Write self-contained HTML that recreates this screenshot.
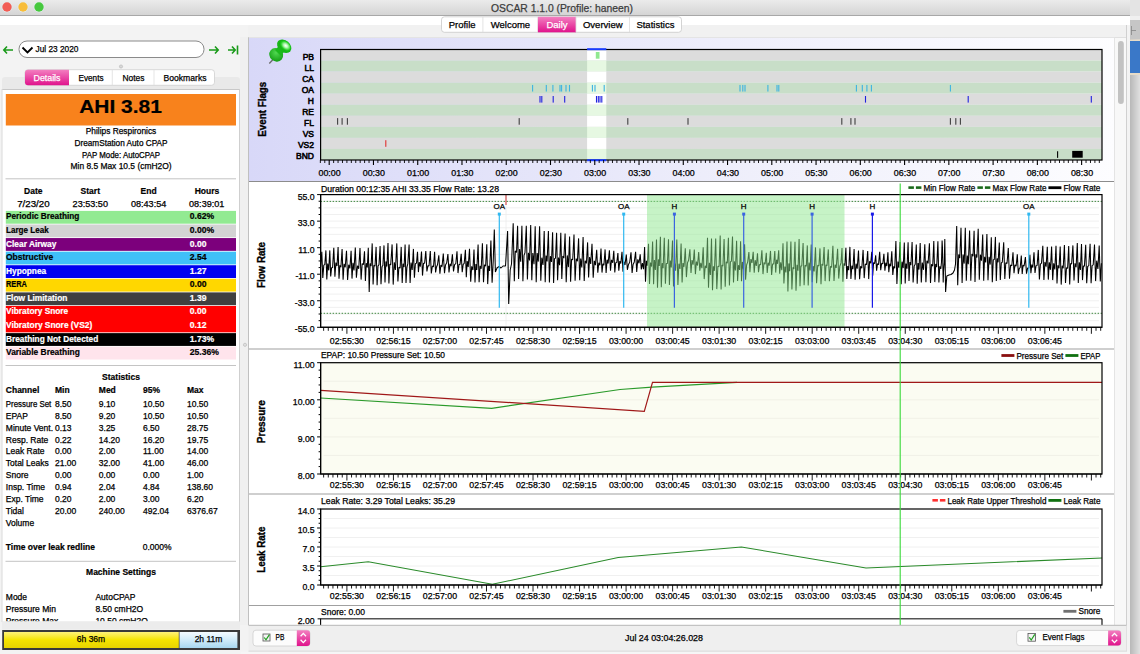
<!DOCTYPE html><html><head><meta charset="utf-8"><style>html,body{margin:0;padding:0;width:1140px;height:654px;overflow:hidden;background:#f3f3f3}</style></head><body><svg width="1140" height="654" viewBox="0 0 1140 654" style="position:absolute;left:0;top:0;font-family:'Liberation Sans', sans-serif">
<defs>
<linearGradient id="tb" x1="0" y1="0" x2="0" y2="1"><stop offset="0" stop-color="#ebebeb"/><stop offset="1" stop-color="#d3d3d3"/></linearGradient>
<linearGradient id="pink" x1="0" y1="0" x2="0" y2="1"><stop offset="0" stop-color="#f37fc0"/><stop offset="1" stop-color="#e0138c"/></linearGradient>
<linearGradient id="lav" x1="0" y1="0" x2="1" y2="0"><stop offset="0" stop-color="#d8d8f8"/><stop offset="0.55" stop-color="#eeeefb"/><stop offset="1" stop-color="#fdfdff"/></linearGradient>
<linearGradient id="yel" x1="0" y1="0" x2="0" y2="1"><stop offset="0" stop-color="#fff27a"/><stop offset="0.5" stop-color="#f5e400"/><stop offset="1" stop-color="#e8d400"/></linearGradient>
<linearGradient id="lblue" x1="0" y1="0" x2="0" y2="1"><stop offset="0" stop-color="#f4fbff"/><stop offset="0.6" stop-color="#c8e8f8"/><stop offset="1" stop-color="#a8d8f0"/></linearGradient>
<linearGradient id="pin" x1="0" y1="0" x2="1" y2="1"><stop offset="0" stop-color="#7ef07e"/><stop offset="1" stop-color="#1a9a1a"/></linearGradient>
<linearGradient id="rstrip" x1="0" y1="0" x2="1" y2="0"><stop offset="0" stop-color="#b8b8b8"/><stop offset="1" stop-color="#e0e0e0"/></linearGradient>
</defs>
<rect x="0" y="0" width="1140" height="654" fill="#f3f3f3" />
<rect x="1130" y="0" width="10" height="654" fill="url(#rstrip)" />
<rect x="1130" y="0" width="10" height="16" fill="#e4e4e4" />
<rect x="1130" y="16" width="10" height="4" fill="#f0f0f0" />
<rect x="1130" y="20" width="10" height="19.5" fill="#c6c6c6" />
<line x1="1131" y1="30.5" x2="1136" y2="30.5" stroke="#888" stroke-width="0.8" />
<line x1="1131.5" y1="26" x2="1131.5" y2="35" stroke="#888" stroke-width="0.8" />
<rect x="1130" y="39.5" width="10" height="1.5" fill="#e8dcc8" />
<rect x="1130" y="41" width="10" height="32" fill="#3a78c8" />
<rect x="1130" y="73" width="10" height="2" fill="#e8dcc8" />
<rect x="0" y="0" width="1130" height="16" fill="url(#tb)" />
<line x1="0" y1="15.5" x2="1130" y2="15.5" stroke="#a8a8a8" stroke-width="1" />
<circle cx="7" cy="7" r="5.3" fill="#e4eef0"/><circle cx="7" cy="7" r="4.7" fill="#f25c54"/>
<circle cx="23" cy="7" r="5.3" fill="#e4eef0"/><circle cx="23" cy="7" r="4.7" fill="#f8bd3a"/>
<circle cx="39" cy="7" r="5.3" fill="#e4eef0"/><circle cx="39" cy="7" r="4.7" fill="#47c83e"/>
<text x="562" y="11.5" font-size="11" font-weight="normal" fill="#3c3c3c" text-anchor="middle" textLength="142" lengthAdjust="spacingAndGlyphs" stroke="#3c3c3c" stroke-width="0.25" >OSCAR 1.1.0 (Profile: haneen)</text>
<rect x="0" y="16" width="1130" height="9" fill="#ffffff" />
<path d="M248,37 L248,26 Q248,25 250,25 L1125,25 Q1127,25 1127,27 L1127,37 Z" fill="#f1f1f1"/>
<line x1="248" y1="37.5" x2="1127" y2="37.5" stroke="#c8c8c8" stroke-width="1" />
<rect x="441.5" y="16.8" width="240" height="15.5" rx="3" fill="#ffffff" stroke="#c9c9c9" stroke-width="0.8"/>
<text x="462.15" y="28" font-size="9.5" font-weight="normal" fill="#000" text-anchor="middle" stroke="#000" stroke-width="0.25" >Profile</text>
<line x1="482.9" y1="17" x2="482.9" y2="32" stroke="#dcdcdc" stroke-width="0.8" />
<text x="510.4" y="28" font-size="9.5" font-weight="normal" fill="#000" text-anchor="middle" stroke="#000" stroke-width="0.25" >Welcome</text>
<line x1="537.9" y1="17" x2="537.9" y2="32" stroke="#dcdcdc" stroke-width="0.8" />
<rect x="537.9" y="16.8" width="38.10000000000002" height="15.5" fill="url(#pink)" />
<text x="556.95" y="28" font-size="9.5" font-weight="normal" fill="#fff" text-anchor="middle" stroke="#fff" stroke-width="0.25" >Daily</text>
<line x1="576" y1="17" x2="576" y2="32" stroke="#dcdcdc" stroke-width="0.8" />
<text x="602.75" y="28" font-size="9.5" font-weight="normal" fill="#000" text-anchor="middle" stroke="#000" stroke-width="0.25" >Overview</text>
<line x1="629.5" y1="17" x2="629.5" y2="32" stroke="#dcdcdc" stroke-width="0.8" />
<text x="655.4" y="28" font-size="9.5" font-weight="normal" fill="#000" text-anchor="middle" stroke="#000" stroke-width="0.25" >Statistics</text>
<g stroke="#1a9a1a" stroke-width="1.6" fill="none"><path d="M4,50 H13 M7,46.5 L3.8,50 L7,53.5"/></g>
<g stroke="#1a9a1a" stroke-width="1.6" fill="none"><path d="M209,50 H218 M215,46.5 L218.2,50 L215,53.5"/></g>
<g stroke="#1a9a1a" stroke-width="1.6" fill="none"><path d="M228,50 H235 M232,46.5 L235.2,50 L232,53.5 M237.5,45.5 V54.5"/></g>
<rect x="19" y="41" width="185" height="16.5" rx="8" fill="#fff" stroke="#8a8a8a" stroke-width="1"/>
<path d="M22.5,47.5 L27.5,52.5 L32.5,47.5" stroke="#000" stroke-width="1.8" fill="none"/>
<text x="35.5" y="51.7" font-size="9" font-weight="normal" fill="#000" text-anchor="start" textLength="43" lengthAdjust="spacingAndGlyphs" stroke="#000" stroke-width="0.25" >Jul 23 2020</text>
<circle cx="121" cy="66.5" r="1.6" fill="#d8d8d8" stroke="#aaa" stroke-width="0.5"/>
<rect x="2" y="77" width="238" height="550" rx="3" fill="#e9e9e9"/>
<rect x="2" y="89" width="237.5" height="532.5" fill="#ffffff" />
<line x1="2" y1="89.5" x2="239.5" y2="89.5" stroke="#c8c8c8" stroke-width="1" />
<line x1="239.5" y1="89" x2="239.5" y2="622" stroke="#cfcfcf" stroke-width="1" />
<line x1="2" y1="89" x2="2" y2="622" stroke="#dadada" stroke-width="1" />
<rect x="25" y="69.7" width="189.5" height="15.6" rx="3" fill="#ffffff" stroke="#cfcfcf" stroke-width="0.8"/>
<path d="M28,69.7 H69 V85.3 H28 Q25,85.3 25,82.3 V72.7 Q25,69.7 28,69.7 Z" fill="url(#pink)"/>
<text x="47" y="80.8" font-size="9" font-weight="normal" fill="#fff" text-anchor="middle" textLength="27" lengthAdjust="spacingAndGlyphs" stroke="#fff" stroke-width="0.25" >Details</text>
<text x="91" y="80.8" font-size="9" font-weight="normal" fill="#000" text-anchor="middle" textLength="25" lengthAdjust="spacingAndGlyphs" stroke="#000" stroke-width="0.25" >Events</text>
<text x="133.5" y="80.8" font-size="9" font-weight="normal" fill="#000" text-anchor="middle" textLength="22" lengthAdjust="spacingAndGlyphs" stroke="#000" stroke-width="0.25" >Notes</text>
<text x="185" y="80.8" font-size="9" font-weight="normal" fill="#000" text-anchor="middle" textLength="43" lengthAdjust="spacingAndGlyphs" stroke="#000" stroke-width="0.25" >Bookmarks</text>
<line x1="112.3" y1="70" x2="112.3" y2="85" stroke="#dedede" stroke-width="0.8" />
<line x1="154" y1="70" x2="154" y2="85" stroke="#dedede" stroke-width="0.8" />
<rect x="5.8" y="94" width="230.2" height="31.5" fill="#f8821c" />
<text x="120.5" y="113" font-size="18.5" font-weight="bold" fill="#000" text-anchor="middle" textLength="82.7" lengthAdjust="spacingAndGlyphs" stroke="#000" stroke-width="0.2" >AHI 3.81</text>
<text x="121" y="133.6" font-size="8.5" font-weight="normal" fill="#000" text-anchor="middle" textLength="70.5" lengthAdjust="spacingAndGlyphs" stroke="#000" stroke-width="0.25" >Philips Respironics</text>
<text x="121" y="145.54999999999998" font-size="8.5" font-weight="normal" fill="#000" text-anchor="middle" textLength="93" lengthAdjust="spacingAndGlyphs" stroke="#000" stroke-width="0.25" >DreamStation Auto CPAP</text>
<text x="121" y="157.5" font-size="8.5" font-weight="normal" fill="#000" text-anchor="middle" textLength="78" lengthAdjust="spacingAndGlyphs" stroke="#000" stroke-width="0.25" >PAP Mode: AutoCPAP</text>
<text x="121" y="169.45" font-size="8.5" font-weight="normal" fill="#000" text-anchor="middle" textLength="101" lengthAdjust="spacingAndGlyphs" stroke="#000" stroke-width="0.25" >Min 8.5 Max 10.5 (cmH2O)</text>
<line x1="5.5" y1="178.8" x2="236" y2="178.8" stroke="#c4c4c4" stroke-width="1" />
<text x="33.3" y="194.3" font-size="8.5" font-weight="bold" fill="#000" text-anchor="middle" stroke="#000" stroke-width="0.2" >Date</text>
<text x="90.3" y="194.3" font-size="8.5" font-weight="bold" fill="#000" text-anchor="middle" stroke="#000" stroke-width="0.2" >Start</text>
<text x="148.6" y="194.3" font-size="8.5" font-weight="bold" fill="#000" text-anchor="middle" stroke="#000" stroke-width="0.2" >End</text>
<text x="207" y="194.3" font-size="8.5" font-weight="bold" fill="#000" text-anchor="middle" stroke="#000" stroke-width="0.2" >Hours</text>
<text x="33.4" y="206.9" font-size="8.5" font-weight="normal" fill="#000" text-anchor="middle" textLength="32.4" lengthAdjust="spacingAndGlyphs" stroke="#000" stroke-width="0.25" >7/23/20</text>
<text x="90.3" y="206.9" font-size="8.5" font-weight="normal" fill="#000" text-anchor="middle" textLength="35.4" lengthAdjust="spacingAndGlyphs" stroke="#000" stroke-width="0.25" >23:53:50</text>
<text x="148.6" y="206.9" font-size="8.5" font-weight="normal" fill="#000" text-anchor="middle" textLength="35.4" lengthAdjust="spacingAndGlyphs" stroke="#000" stroke-width="0.25" >08:43:54</text>
<text x="206.7" y="206.9" font-size="8.5" font-weight="normal" fill="#000" text-anchor="middle" textLength="35.4" lengthAdjust="spacingAndGlyphs" stroke="#000" stroke-width="0.25" >08:39:01</text>
<rect x="5.8" y="210.9" width="230.2" height="12.8" fill="#92ea92" />
<text x="6" y="219.4" font-size="8.6" font-weight="bold" fill="#000" text-anchor="start" textLength="73.3" lengthAdjust="spacingAndGlyphs" stroke="#000" stroke-width="0.2" >Periodic Breathing</text>
<text x="189.8" y="219.4" font-size="8.6" font-weight="bold" fill="#000" text-anchor="start" stroke="#000" stroke-width="0.2" >0.62%</text>
<rect x="5.8" y="224.48000000000002" width="230.2" height="12.8" fill="#d3d3d3" />
<text x="6" y="232.98000000000002" font-size="8.6" font-weight="bold" fill="#000" text-anchor="start" textLength="42.7" lengthAdjust="spacingAndGlyphs" stroke="#000" stroke-width="0.2" >Large Leak</text>
<text x="189.8" y="232.98000000000002" font-size="8.6" font-weight="bold" fill="#000" text-anchor="start" stroke="#000" stroke-width="0.2" >0.00%</text>
<rect x="5.8" y="238.06" width="230.2" height="12.8" fill="#7c007c" />
<text x="6" y="246.56" font-size="8.6" font-weight="bold" fill="#fff" text-anchor="start" textLength="50.4" lengthAdjust="spacingAndGlyphs" stroke="#fff" stroke-width="0.2" >Clear Airway</text>
<text x="189.8" y="246.56" font-size="8.6" font-weight="bold" fill="#fff" text-anchor="start" stroke="#fff" stroke-width="0.2" >0.00</text>
<rect x="5.8" y="251.64000000000001" width="230.2" height="12.8" fill="#40c0f8" />
<text x="6" y="260.14" font-size="8.6" font-weight="bold" fill="#000" text-anchor="start" textLength="47.1" lengthAdjust="spacingAndGlyphs" stroke="#000" stroke-width="0.2" >Obstructive</text>
<text x="189.8" y="260.14" font-size="8.6" font-weight="bold" fill="#000" text-anchor="start" stroke="#000" stroke-width="0.2" >2.54</text>
<rect x="5.8" y="265.22" width="230.2" height="12.8" fill="#0000f0" />
<text x="6" y="273.72" font-size="8.6" font-weight="bold" fill="#fff" text-anchor="start" textLength="40.2" lengthAdjust="spacingAndGlyphs" stroke="#fff" stroke-width="0.2" >Hypopnea</text>
<text x="189.8" y="273.72" font-size="8.6" font-weight="bold" fill="#fff" text-anchor="start" stroke="#fff" stroke-width="0.2" >1.27</text>
<rect x="5.8" y="278.8" width="230.2" height="12.8" fill="#ffd700" />
<text x="6" y="287.3" font-size="8.6" font-weight="bold" fill="#000" text-anchor="start" textLength="20.9" lengthAdjust="spacingAndGlyphs" stroke="#000" stroke-width="0.2" >RERA</text>
<text x="189.8" y="287.3" font-size="8.6" font-weight="bold" fill="#000" text-anchor="start" stroke="#000" stroke-width="0.2" >0.00</text>
<rect x="5.8" y="292.38" width="230.2" height="12.8" fill="#404040" />
<text x="6" y="300.88" font-size="8.6" font-weight="bold" fill="#fff" text-anchor="start" textLength="61.4" lengthAdjust="spacingAndGlyphs" stroke="#fff" stroke-width="0.2" >Flow Limitation</text>
<text x="189.8" y="300.88" font-size="8.6" font-weight="bold" fill="#fff" text-anchor="start" stroke="#fff" stroke-width="0.2" >1.39</text>
<rect x="5.8" y="305.96000000000004" width="230.2" height="14.18" fill="#ff0000" />
<text x="6" y="314.46000000000004" font-size="8.6" font-weight="bold" fill="#fff" text-anchor="start" textLength="62.2" lengthAdjust="spacingAndGlyphs" stroke="#fff" stroke-width="0.2" >Vibratory Snore</text>
<text x="189.8" y="314.46000000000004" font-size="8.6" font-weight="bold" fill="#fff" text-anchor="start" stroke="#fff" stroke-width="0.2" >0.00</text>
<rect x="5.8" y="319.54" width="230.2" height="12.8" fill="#ff0000" />
<text x="6" y="328.04" font-size="8.6" font-weight="bold" fill="#fff" text-anchor="start" textLength="86.2" lengthAdjust="spacingAndGlyphs" stroke="#fff" stroke-width="0.2" >Vibratory Snore (VS2)</text>
<text x="189.8" y="328.04" font-size="8.6" font-weight="bold" fill="#fff" text-anchor="start" stroke="#fff" stroke-width="0.2" >0.12</text>
<rect x="5.8" y="333.12" width="230.2" height="12.8" fill="#000000" />
<text x="6" y="341.62" font-size="8.6" font-weight="bold" fill="#fff" text-anchor="start" textLength="92.2" lengthAdjust="spacingAndGlyphs" stroke="#fff" stroke-width="0.2" >Breathing Not Detected</text>
<text x="189.8" y="341.62" font-size="8.6" font-weight="bold" fill="#fff" text-anchor="start" stroke="#fff" stroke-width="0.2" >1.73%</text>
<rect x="5.8" y="346.70000000000005" width="230.2" height="12.8" fill="#ffe4ec" />
<text x="6" y="355.20000000000005" font-size="8.6" font-weight="bold" fill="#000" text-anchor="start" textLength="73.8" lengthAdjust="spacingAndGlyphs" stroke="#000" stroke-width="0.2" >Variable Breathing</text>
<text x="189.8" y="355.20000000000005" font-size="8.6" font-weight="bold" fill="#000" text-anchor="start" stroke="#000" stroke-width="0.2" >25.36%</text>
<line x1="5.5" y1="365.5" x2="236" y2="365.5" stroke="#c4c4c4" stroke-width="1" />
<text x="121" y="380" font-size="8.5" font-weight="bold" fill="#000" text-anchor="middle" stroke="#000" stroke-width="0.2" >Statistics</text>
<text x="5.8" y="393" font-size="8.5" font-weight="bold" fill="#000" text-anchor="start" stroke="#000" stroke-width="0.2" >Channel</text>
<text x="55" y="393" font-size="8.5" font-weight="bold" fill="#000" text-anchor="start" stroke="#000" stroke-width="0.2" >Min</text>
<text x="98.8" y="393" font-size="8.5" font-weight="bold" fill="#000" text-anchor="start" stroke="#000" stroke-width="0.2" >Med</text>
<text x="143" y="393" font-size="8.5" font-weight="bold" fill="#000" text-anchor="start" stroke="#000" stroke-width="0.2" >95%</text>
<text x="187" y="393" font-size="8.5" font-weight="bold" fill="#000" text-anchor="start" stroke="#000" stroke-width="0.2" >Max</text>
<text x="5.8" y="406.6" font-size="8.5" font-weight="normal" fill="#000" text-anchor="start" textLength="45.5" lengthAdjust="spacingAndGlyphs" stroke="#000" stroke-width="0.25" >Pressure Set</text>
<text x="55" y="406.6" font-size="8.5" font-weight="normal" fill="#000" text-anchor="start" stroke="#000" stroke-width="0.25" >8.50</text>
<text x="98.8" y="406.6" font-size="8.5" font-weight="normal" fill="#000" text-anchor="start" stroke="#000" stroke-width="0.25" >9.10</text>
<text x="143" y="406.6" font-size="8.5" font-weight="normal" fill="#000" text-anchor="start" stroke="#000" stroke-width="0.25" >10.50</text>
<text x="187" y="406.6" font-size="8.5" font-weight="normal" fill="#000" text-anchor="start" stroke="#000" stroke-width="0.25" >10.50</text>
<text x="5.8" y="418.57000000000005" font-size="8.5" font-weight="normal" fill="#000" text-anchor="start" stroke="#000" stroke-width="0.25" >EPAP</text>
<text x="55" y="418.57000000000005" font-size="8.5" font-weight="normal" fill="#000" text-anchor="start" stroke="#000" stroke-width="0.25" >8.50</text>
<text x="98.8" y="418.57000000000005" font-size="8.5" font-weight="normal" fill="#000" text-anchor="start" stroke="#000" stroke-width="0.25" >9.20</text>
<text x="143" y="418.57000000000005" font-size="8.5" font-weight="normal" fill="#000" text-anchor="start" stroke="#000" stroke-width="0.25" >10.50</text>
<text x="187" y="418.57000000000005" font-size="8.5" font-weight="normal" fill="#000" text-anchor="start" stroke="#000" stroke-width="0.25" >10.50</text>
<text x="5.8" y="430.54" font-size="8.5" font-weight="normal" fill="#000" text-anchor="start" stroke="#000" stroke-width="0.25" >Minute Vent.</text>
<text x="55" y="430.54" font-size="8.5" font-weight="normal" fill="#000" text-anchor="start" stroke="#000" stroke-width="0.25" >0.13</text>
<text x="98.8" y="430.54" font-size="8.5" font-weight="normal" fill="#000" text-anchor="start" stroke="#000" stroke-width="0.25" >3.25</text>
<text x="143" y="430.54" font-size="8.5" font-weight="normal" fill="#000" text-anchor="start" stroke="#000" stroke-width="0.25" >6.50</text>
<text x="187" y="430.54" font-size="8.5" font-weight="normal" fill="#000" text-anchor="start" stroke="#000" stroke-width="0.25" >28.75</text>
<text x="5.8" y="442.51000000000005" font-size="8.5" font-weight="normal" fill="#000" text-anchor="start" stroke="#000" stroke-width="0.25" >Resp. Rate</text>
<text x="55" y="442.51000000000005" font-size="8.5" font-weight="normal" fill="#000" text-anchor="start" stroke="#000" stroke-width="0.25" >0.22</text>
<text x="98.8" y="442.51000000000005" font-size="8.5" font-weight="normal" fill="#000" text-anchor="start" stroke="#000" stroke-width="0.25" >14.20</text>
<text x="143" y="442.51000000000005" font-size="8.5" font-weight="normal" fill="#000" text-anchor="start" stroke="#000" stroke-width="0.25" >16.20</text>
<text x="187" y="442.51000000000005" font-size="8.5" font-weight="normal" fill="#000" text-anchor="start" stroke="#000" stroke-width="0.25" >19.75</text>
<text x="5.8" y="454.48" font-size="8.5" font-weight="normal" fill="#000" text-anchor="start" stroke="#000" stroke-width="0.25" >Leak Rate</text>
<text x="55" y="454.48" font-size="8.5" font-weight="normal" fill="#000" text-anchor="start" stroke="#000" stroke-width="0.25" >0.00</text>
<text x="98.8" y="454.48" font-size="8.5" font-weight="normal" fill="#000" text-anchor="start" stroke="#000" stroke-width="0.25" >2.00</text>
<text x="143" y="454.48" font-size="8.5" font-weight="normal" fill="#000" text-anchor="start" stroke="#000" stroke-width="0.25" >11.00</text>
<text x="187" y="454.48" font-size="8.5" font-weight="normal" fill="#000" text-anchor="start" stroke="#000" stroke-width="0.25" >14.00</text>
<text x="5.8" y="466.45000000000005" font-size="8.5" font-weight="normal" fill="#000" text-anchor="start" stroke="#000" stroke-width="0.25" >Total Leaks</text>
<text x="55" y="466.45000000000005" font-size="8.5" font-weight="normal" fill="#000" text-anchor="start" stroke="#000" stroke-width="0.25" >21.00</text>
<text x="98.8" y="466.45000000000005" font-size="8.5" font-weight="normal" fill="#000" text-anchor="start" stroke="#000" stroke-width="0.25" >32.00</text>
<text x="143" y="466.45000000000005" font-size="8.5" font-weight="normal" fill="#000" text-anchor="start" stroke="#000" stroke-width="0.25" >41.00</text>
<text x="187" y="466.45000000000005" font-size="8.5" font-weight="normal" fill="#000" text-anchor="start" stroke="#000" stroke-width="0.25" >46.00</text>
<text x="5.8" y="478.42" font-size="8.5" font-weight="normal" fill="#000" text-anchor="start" stroke="#000" stroke-width="0.25" >Snore</text>
<text x="55" y="478.42" font-size="8.5" font-weight="normal" fill="#000" text-anchor="start" stroke="#000" stroke-width="0.25" >0.00</text>
<text x="98.8" y="478.42" font-size="8.5" font-weight="normal" fill="#000" text-anchor="start" stroke="#000" stroke-width="0.25" >0.00</text>
<text x="143" y="478.42" font-size="8.5" font-weight="normal" fill="#000" text-anchor="start" stroke="#000" stroke-width="0.25" >0.00</text>
<text x="187" y="478.42" font-size="8.5" font-weight="normal" fill="#000" text-anchor="start" stroke="#000" stroke-width="0.25" >1.00</text>
<text x="5.8" y="490.39000000000004" font-size="8.5" font-weight="normal" fill="#000" text-anchor="start" stroke="#000" stroke-width="0.25" >Insp. Time</text>
<text x="55" y="490.39000000000004" font-size="8.5" font-weight="normal" fill="#000" text-anchor="start" stroke="#000" stroke-width="0.25" >0.94</text>
<text x="98.8" y="490.39000000000004" font-size="8.5" font-weight="normal" fill="#000" text-anchor="start" stroke="#000" stroke-width="0.25" >2.04</text>
<text x="143" y="490.39000000000004" font-size="8.5" font-weight="normal" fill="#000" text-anchor="start" stroke="#000" stroke-width="0.25" >4.84</text>
<text x="187" y="490.39000000000004" font-size="8.5" font-weight="normal" fill="#000" text-anchor="start" stroke="#000" stroke-width="0.25" >138.60</text>
<text x="5.8" y="502.36" font-size="8.5" font-weight="normal" fill="#000" text-anchor="start" stroke="#000" stroke-width="0.25" >Exp. Time</text>
<text x="55" y="502.36" font-size="8.5" font-weight="normal" fill="#000" text-anchor="start" stroke="#000" stroke-width="0.25" >0.20</text>
<text x="98.8" y="502.36" font-size="8.5" font-weight="normal" fill="#000" text-anchor="start" stroke="#000" stroke-width="0.25" >2.00</text>
<text x="143" y="502.36" font-size="8.5" font-weight="normal" fill="#000" text-anchor="start" stroke="#000" stroke-width="0.25" >3.00</text>
<text x="187" y="502.36" font-size="8.5" font-weight="normal" fill="#000" text-anchor="start" stroke="#000" stroke-width="0.25" >6.20</text>
<text x="5.8" y="514.33" font-size="8.5" font-weight="normal" fill="#000" text-anchor="start" stroke="#000" stroke-width="0.25" >Tidal</text>
<text x="55" y="514.33" font-size="8.5" font-weight="normal" fill="#000" text-anchor="start" stroke="#000" stroke-width="0.25" >20.00</text>
<text x="98.8" y="514.33" font-size="8.5" font-weight="normal" fill="#000" text-anchor="start" stroke="#000" stroke-width="0.25" >240.00</text>
<text x="143" y="514.33" font-size="8.5" font-weight="normal" fill="#000" text-anchor="start" stroke="#000" stroke-width="0.25" >492.04</text>
<text x="187" y="514.33" font-size="8.5" font-weight="normal" fill="#000" text-anchor="start" stroke="#000" stroke-width="0.25" >6376.67</text>
<text x="5.8" y="526" font-size="8.5" font-weight="normal" fill="#000" text-anchor="start" stroke="#000" stroke-width="0.25" >Volume</text>
<text x="5.8" y="549.6" font-size="8.5" font-weight="bold" fill="#000" text-anchor="start" stroke="#000" stroke-width="0.2" >Time over leak redline</text>
<text x="142.7" y="549.6" font-size="8.5" font-weight="normal" fill="#000" text-anchor="start" stroke="#000" stroke-width="0.25" >0.000%</text>
<line x1="5.5" y1="561.3" x2="236" y2="561.3" stroke="#c4c4c4" stroke-width="1" />
<text x="121" y="575.4" font-size="8.5" font-weight="bold" fill="#000" text-anchor="middle" stroke="#000" stroke-width="0.2" >Machine Settings</text>
<text x="5.8" y="600.3" font-size="8.5" font-weight="normal" fill="#000" text-anchor="start" stroke="#000" stroke-width="0.25" >Mode</text>
<text x="95.4" y="600.3" font-size="8.5" font-weight="normal" fill="#000" text-anchor="start" stroke="#000" stroke-width="0.25" >AutoCPAP</text>
<text x="5.8" y="612.4" font-size="8.5" font-weight="normal" fill="#000" text-anchor="start" stroke="#000" stroke-width="0.25" >Pressure Min</text>
<text x="95.4" y="612.4" font-size="8.5" font-weight="normal" fill="#000" text-anchor="start" stroke="#000" stroke-width="0.25" >8.50 cmH2O</text>
<clipPath id="lc"><rect x="0" y="614" width="240" height="7.2"/></clipPath>
<text x="5.8" y="624.4" font-size="8.5" font-weight="normal" fill="#000" text-anchor="start" stroke="#000" stroke-width="0.25" clip-path="url(#lc)">Pressure Max</text>
<text x="95.4" y="624.4" font-size="8.5" font-weight="normal" fill="#000" text-anchor="start" stroke="#000" stroke-width="0.25" clip-path="url(#lc)">10.50 cmH2O</text>
<rect x="2" y="621.5" width="238" height="8" fill="#ececec" />
<rect x="2.2" y="630" width="237.8" height="20" fill="#3a3a3a" />
<rect x="4" y="632" width="174.8" height="16" fill="url(#yel)" />
<rect x="179.5" y="632" width="57.9" height="16" fill="url(#lblue)" />
<text x="91" y="642.2" font-size="8.5" font-weight="normal" fill="#000" text-anchor="middle" stroke="#000" stroke-width="0.25" >6h 36m</text>
<text x="208.5" y="642.2" font-size="8.5" font-weight="normal" fill="#000" text-anchor="middle" stroke="#000" stroke-width="0.25" >2h 11m</text>
<rect x="240" y="37" width="8" height="588" fill="#f0f0f0" />
<circle cx="245" cy="344.8" r="1.6" fill="#e0e0e0" stroke="#aaa" stroke-width="0.5"/>
<rect x="248.5" y="37.5" width="865.5" height="587.5" fill="#ffffff" />
<rect x="248.5" y="38" width="865.5" height="143" fill="url(#lav)" />
<line x1="248.5" y1="181.5" x2="1114" y2="181.5" stroke="#8c8c8c" stroke-width="1" />
<line x1="248.5" y1="349" x2="1114" y2="349" stroke="#a0a0a0" stroke-width="1.2" />
<line x1="248.5" y1="494" x2="1114" y2="494" stroke="#a0a0a0" stroke-width="1.2" />
<line x1="248.5" y1="605.5" x2="1114" y2="605.5" stroke="#a0a0a0" stroke-width="1.2" />
<line x1="248.5" y1="37.5" x2="248.5" y2="625" stroke="#c0c0c0" stroke-width="1" />
<rect x="1114" y="37.5" width="12.5" height="588" fill="#f8f8f8" />
<line x1="1114.5" y1="37.5" x2="1114.5" y2="625" stroke="#e4e4e4" stroke-width="1" />
<line x1="1126.5" y1="25" x2="1126.5" y2="652" stroke="#d0d0d0" stroke-width="1" />
<rect x="1118" y="41" width="5.8" height="63" rx="2.9" fill="#c2c2c2"/>
<rect x="320.6" y="49.5" width="781.4" height="11.05" fill="#dcdcdc" />
<text x="314" y="59.6" font-size="8.5" font-weight="normal" fill="#000" text-anchor="end" stroke="#000" stroke-width="0.55" >PB</text>
<rect x="320.6" y="60.55" width="781.4" height="11.05" fill="#c8dec8" />
<text x="314" y="70.64999999999999" font-size="8.5" font-weight="normal" fill="#000" text-anchor="end" stroke="#000" stroke-width="0.55" >LL</text>
<rect x="320.6" y="71.6" width="781.4" height="11.05" fill="#dcdcdc" />
<text x="314" y="81.69999999999999" font-size="8.5" font-weight="normal" fill="#000" text-anchor="end" stroke="#000" stroke-width="0.55" >CA</text>
<rect x="320.6" y="82.65" width="781.4" height="11.05" fill="#c8dec8" />
<text x="314" y="92.75" font-size="8.5" font-weight="normal" fill="#000" text-anchor="end" stroke="#000" stroke-width="0.55" >OA</text>
<rect x="320.6" y="93.7" width="781.4" height="11.05" fill="#dcdcdc" />
<text x="314" y="103.8" font-size="8.5" font-weight="normal" fill="#000" text-anchor="end" stroke="#000" stroke-width="0.55" >H</text>
<rect x="320.6" y="104.75" width="781.4" height="11.05" fill="#c8dec8" />
<text x="314" y="114.85" font-size="8.5" font-weight="normal" fill="#000" text-anchor="end" stroke="#000" stroke-width="0.55" >RE</text>
<rect x="320.6" y="115.80000000000001" width="781.4" height="11.05" fill="#dcdcdc" />
<text x="314" y="125.9" font-size="8.5" font-weight="normal" fill="#000" text-anchor="end" stroke="#000" stroke-width="0.55" >FL</text>
<rect x="320.6" y="126.85000000000001" width="781.4" height="11.05" fill="#c8dec8" />
<text x="314" y="136.95000000000002" font-size="8.5" font-weight="normal" fill="#000" text-anchor="end" stroke="#000" stroke-width="0.55" >VS</text>
<rect x="320.6" y="137.9" width="781.4" height="11.05" fill="#dcdcdc" />
<text x="314" y="148.0" font-size="8.5" font-weight="normal" fill="#000" text-anchor="end" stroke="#000" stroke-width="0.55" >VS2</text>
<rect x="320.6" y="148.95" width="781.4" height="11.05" fill="#c8dec8" />
<text x="314" y="159.04999999999998" font-size="8.5" font-weight="normal" fill="#000" text-anchor="end" stroke="#000" stroke-width="0.55" >BND</text>
<rect x="587.1" y="49.5" width="19.2" height="11.05" fill="#ffffff" />
<rect x="587.1" y="60.55" width="19.2" height="11.05" fill="#e6f8e2" />
<rect x="587.1" y="71.6" width="19.2" height="11.05" fill="#ffffff" />
<rect x="587.1" y="82.65" width="19.2" height="11.05" fill="#e6f8e2" />
<rect x="587.1" y="93.7" width="19.2" height="11.05" fill="#ffffff" />
<rect x="587.1" y="104.75" width="19.2" height="11.05" fill="#e6f8e2" />
<rect x="587.1" y="115.80000000000001" width="19.2" height="11.05" fill="#ffffff" />
<rect x="587.1" y="126.85000000000001" width="19.2" height="11.05" fill="#e6f8e2" />
<rect x="587.1" y="137.9" width="19.2" height="11.05" fill="#ffffff" />
<rect x="587.1" y="148.95" width="19.2" height="11.05" fill="#e6f8e2" />
<rect x="320.6" y="49.5" width="781.4" height="110.5" fill="none" stroke="#000" stroke-width="1.2"/>
<rect x="587.1" y="48.2" width="19.2" height="2" fill="#1a3cff" />
<rect x="587.1" y="159.2" width="19.2" height="2" fill="#1a3cff" />
<rect x="595.8" y="52" width="3.7" height="6.7" fill="#90e890" />
<rect x="532.0500000000001" y="84.95" width="1.1" height="6.6" fill="#3cb4e0" />
<rect x="545.75" y="84.95" width="1.1" height="6.6" fill="#3cb4e0" />
<rect x="552.35" y="84.95" width="1.1" height="6.6" fill="#3cb4e0" />
<rect x="559.45" y="84.95" width="1.1" height="6.6" fill="#3cb4e0" />
<rect x="561.0500000000001" y="84.95" width="1.1" height="6.6" fill="#3cb4e0" />
<rect x="565.45" y="84.95" width="1.1" height="6.6" fill="#3cb4e0" />
<rect x="568.95" y="84.95" width="1.1" height="6.6" fill="#3cb4e0" />
<rect x="591.85" y="84.95" width="1.1" height="6.6" fill="#3cb4e0" />
<rect x="594.45" y="84.95" width="1.1" height="6.6" fill="#3cb4e0" />
<rect x="603.6500000000001" y="84.95" width="1.1" height="6.6" fill="#3cb4e0" />
<rect x="739.45" y="84.95" width="1.1" height="6.6" fill="#3cb4e0" />
<rect x="742.25" y="84.95" width="1.1" height="6.6" fill="#3cb4e0" />
<rect x="744.45" y="84.95" width="1.1" height="6.6" fill="#3cb4e0" />
<rect x="767.35" y="84.95" width="1.1" height="6.6" fill="#3cb4e0" />
<rect x="776.45" y="84.95" width="1.1" height="6.6" fill="#3cb4e0" />
<rect x="778.25" y="84.95" width="1.1" height="6.6" fill="#3cb4e0" />
<rect x="855.85" y="84.95" width="1.1" height="6.6" fill="#3cb4e0" />
<rect x="861.75" y="84.95" width="1.1" height="6.6" fill="#3cb4e0" />
<rect x="866.35" y="84.95" width="1.1" height="6.6" fill="#3cb4e0" />
<rect x="870.85" y="84.95" width="1.1" height="6.6" fill="#3cb4e0" />
<rect x="949.85" y="84.95" width="1.1" height="6.6" fill="#3cb4e0" />
<rect x="539.45" y="96.0" width="1.1" height="6.6" fill="#2020e0" />
<rect x="541.25" y="96.0" width="1.1" height="6.6" fill="#2020e0" />
<rect x="552.6500000000001" y="96.0" width="1.1" height="6.6" fill="#2020e0" />
<rect x="564.1500000000001" y="96.0" width="1.1" height="6.6" fill="#2020e0" />
<rect x="595.95" y="96.0" width="1.1" height="6.6" fill="#2020e0" />
<rect x="597.75" y="96.0" width="1.1" height="6.6" fill="#2020e0" />
<rect x="599.45" y="96.0" width="1.1" height="6.6" fill="#2020e0" />
<rect x="601.25" y="96.0" width="1.1" height="6.6" fill="#2020e0" />
<rect x="864.95" y="96.0" width="1.1" height="6.6" fill="#2020e0" />
<rect x="967.6500000000001" y="96.0" width="1.1" height="6.6" fill="#2020e0" />
<rect x="1090.75" y="96.0" width="1.1" height="6.6" fill="#2020e0" />
<rect x="337.05" y="118.10000000000001" width="1.1" height="6.6" fill="#404040" />
<rect x="341.55" y="118.10000000000001" width="1.1" height="6.6" fill="#404040" />
<rect x="346.84999999999997" y="118.10000000000001" width="1.1" height="6.6" fill="#404040" />
<rect x="518.6500000000001" y="118.10000000000001" width="1.1" height="6.6" fill="#404040" />
<rect x="627.25" y="118.10000000000001" width="1.1" height="6.6" fill="#404040" />
<rect x="687.45" y="118.10000000000001" width="1.1" height="6.6" fill="#404040" />
<rect x="841.25" y="118.10000000000001" width="1.1" height="6.6" fill="#404040" />
<rect x="850.35" y="118.10000000000001" width="1.1" height="6.6" fill="#404040" />
<rect x="854.45" y="118.10000000000001" width="1.1" height="6.6" fill="#404040" />
<rect x="949.85" y="118.10000000000001" width="1.1" height="6.6" fill="#404040" />
<rect x="955.25" y="118.10000000000001" width="1.1" height="6.6" fill="#404040" />
<rect x="959.85" y="118.10000000000001" width="1.1" height="6.6" fill="#404040" />
<rect x="385.25" y="140.20000000000002" width="1.1" height="6.6" fill="#e03030" />
<rect x="1057.05" y="151.25" width="1.1" height="6.6" fill="#000" />
<rect x="1072.2" y="150.9" width="10.5" height="6.8" fill="#000" />
<line x1="329.2" y1="160" x2="329.2" y2="165" stroke="#000" stroke-width="1.1" />
<line x1="333.626" y1="160" x2="333.626" y2="163" stroke="#000" stroke-width="0.9" />
<line x1="338.05199999999996" y1="160" x2="338.05199999999996" y2="163" stroke="#000" stroke-width="0.9" />
<line x1="342.478" y1="160" x2="342.478" y2="163" stroke="#000" stroke-width="0.9" />
<line x1="346.904" y1="160" x2="346.904" y2="163" stroke="#000" stroke-width="0.9" />
<line x1="351.33" y1="160" x2="351.33" y2="163" stroke="#000" stroke-width="0.9" />
<line x1="355.756" y1="160" x2="355.756" y2="163" stroke="#000" stroke-width="0.9" />
<line x1="360.182" y1="160" x2="360.182" y2="163" stroke="#000" stroke-width="0.9" />
<line x1="364.608" y1="160" x2="364.608" y2="163" stroke="#000" stroke-width="0.9" />
<line x1="369.034" y1="160" x2="369.034" y2="163" stroke="#000" stroke-width="0.9" />
<line x1="373.46" y1="160" x2="373.46" y2="165" stroke="#000" stroke-width="1.1" />
<line x1="377.88599999999997" y1="160" x2="377.88599999999997" y2="163" stroke="#000" stroke-width="0.9" />
<line x1="382.312" y1="160" x2="382.312" y2="163" stroke="#000" stroke-width="0.9" />
<line x1="386.738" y1="160" x2="386.738" y2="163" stroke="#000" stroke-width="0.9" />
<line x1="391.164" y1="160" x2="391.164" y2="163" stroke="#000" stroke-width="0.9" />
<line x1="395.59" y1="160" x2="395.59" y2="163" stroke="#000" stroke-width="0.9" />
<line x1="400.01599999999996" y1="160" x2="400.01599999999996" y2="163" stroke="#000" stroke-width="0.9" />
<line x1="404.442" y1="160" x2="404.442" y2="163" stroke="#000" stroke-width="0.9" />
<line x1="408.868" y1="160" x2="408.868" y2="163" stroke="#000" stroke-width="0.9" />
<line x1="413.294" y1="160" x2="413.294" y2="163" stroke="#000" stroke-width="0.9" />
<line x1="417.71999999999997" y1="160" x2="417.71999999999997" y2="165" stroke="#000" stroke-width="1.1" />
<line x1="422.14599999999996" y1="160" x2="422.14599999999996" y2="163" stroke="#000" stroke-width="0.9" />
<line x1="426.572" y1="160" x2="426.572" y2="163" stroke="#000" stroke-width="0.9" />
<line x1="430.998" y1="160" x2="430.998" y2="163" stroke="#000" stroke-width="0.9" />
<line x1="435.424" y1="160" x2="435.424" y2="163" stroke="#000" stroke-width="0.9" />
<line x1="439.85" y1="160" x2="439.85" y2="163" stroke="#000" stroke-width="0.9" />
<line x1="444.27599999999995" y1="160" x2="444.27599999999995" y2="163" stroke="#000" stroke-width="0.9" />
<line x1="448.702" y1="160" x2="448.702" y2="163" stroke="#000" stroke-width="0.9" />
<line x1="453.128" y1="160" x2="453.128" y2="163" stroke="#000" stroke-width="0.9" />
<line x1="457.554" y1="160" x2="457.554" y2="163" stroke="#000" stroke-width="0.9" />
<line x1="461.98" y1="160" x2="461.98" y2="165" stroke="#000" stroke-width="1.1" />
<line x1="466.40599999999995" y1="160" x2="466.40599999999995" y2="163" stroke="#000" stroke-width="0.9" />
<line x1="470.832" y1="160" x2="470.832" y2="163" stroke="#000" stroke-width="0.9" />
<line x1="475.258" y1="160" x2="475.258" y2="163" stroke="#000" stroke-width="0.9" />
<line x1="479.68399999999997" y1="160" x2="479.68399999999997" y2="163" stroke="#000" stroke-width="0.9" />
<line x1="484.11" y1="160" x2="484.11" y2="163" stroke="#000" stroke-width="0.9" />
<line x1="488.53599999999994" y1="160" x2="488.53599999999994" y2="163" stroke="#000" stroke-width="0.9" />
<line x1="492.962" y1="160" x2="492.962" y2="163" stroke="#000" stroke-width="0.9" />
<line x1="497.388" y1="160" x2="497.388" y2="163" stroke="#000" stroke-width="0.9" />
<line x1="501.81399999999996" y1="160" x2="501.81399999999996" y2="163" stroke="#000" stroke-width="0.9" />
<line x1="506.24" y1="160" x2="506.24" y2="165" stroke="#000" stroke-width="1.1" />
<line x1="510.66599999999994" y1="160" x2="510.66599999999994" y2="163" stroke="#000" stroke-width="0.9" />
<line x1="515.092" y1="160" x2="515.092" y2="163" stroke="#000" stroke-width="0.9" />
<line x1="519.518" y1="160" x2="519.518" y2="163" stroke="#000" stroke-width="0.9" />
<line x1="523.944" y1="160" x2="523.944" y2="163" stroke="#000" stroke-width="0.9" />
<line x1="528.37" y1="160" x2="528.37" y2="163" stroke="#000" stroke-width="0.9" />
<line x1="532.7959999999999" y1="160" x2="532.7959999999999" y2="163" stroke="#000" stroke-width="0.9" />
<line x1="537.222" y1="160" x2="537.222" y2="163" stroke="#000" stroke-width="0.9" />
<line x1="541.648" y1="160" x2="541.648" y2="163" stroke="#000" stroke-width="0.9" />
<line x1="546.074" y1="160" x2="546.074" y2="163" stroke="#000" stroke-width="0.9" />
<line x1="550.5" y1="160" x2="550.5" y2="165" stroke="#000" stroke-width="1.1" />
<line x1="554.9259999999999" y1="160" x2="554.9259999999999" y2="163" stroke="#000" stroke-width="0.9" />
<line x1="559.352" y1="160" x2="559.352" y2="163" stroke="#000" stroke-width="0.9" />
<line x1="563.778" y1="160" x2="563.778" y2="163" stroke="#000" stroke-width="0.9" />
<line x1="568.204" y1="160" x2="568.204" y2="163" stroke="#000" stroke-width="0.9" />
<line x1="572.63" y1="160" x2="572.63" y2="163" stroke="#000" stroke-width="0.9" />
<line x1="577.056" y1="160" x2="577.056" y2="163" stroke="#000" stroke-width="0.9" />
<line x1="581.482" y1="160" x2="581.482" y2="163" stroke="#000" stroke-width="0.9" />
<line x1="585.9079999999999" y1="160" x2="585.9079999999999" y2="163" stroke="#000" stroke-width="0.9" />
<line x1="590.334" y1="160" x2="590.334" y2="163" stroke="#000" stroke-width="0.9" />
<line x1="594.76" y1="160" x2="594.76" y2="165" stroke="#000" stroke-width="1.1" />
<line x1="599.1859999999999" y1="160" x2="599.1859999999999" y2="163" stroke="#000" stroke-width="0.9" />
<line x1="603.612" y1="160" x2="603.612" y2="163" stroke="#000" stroke-width="0.9" />
<line x1="608.038" y1="160" x2="608.038" y2="163" stroke="#000" stroke-width="0.9" />
<line x1="612.4639999999999" y1="160" x2="612.4639999999999" y2="163" stroke="#000" stroke-width="0.9" />
<line x1="616.89" y1="160" x2="616.89" y2="163" stroke="#000" stroke-width="0.9" />
<line x1="621.316" y1="160" x2="621.316" y2="163" stroke="#000" stroke-width="0.9" />
<line x1="625.742" y1="160" x2="625.742" y2="163" stroke="#000" stroke-width="0.9" />
<line x1="630.1679999999999" y1="160" x2="630.1679999999999" y2="163" stroke="#000" stroke-width="0.9" />
<line x1="634.594" y1="160" x2="634.594" y2="163" stroke="#000" stroke-width="0.9" />
<line x1="639.02" y1="160" x2="639.02" y2="165" stroke="#000" stroke-width="1.1" />
<line x1="643.4459999999999" y1="160" x2="643.4459999999999" y2="163" stroke="#000" stroke-width="0.9" />
<line x1="647.872" y1="160" x2="647.872" y2="163" stroke="#000" stroke-width="0.9" />
<line x1="652.298" y1="160" x2="652.298" y2="163" stroke="#000" stroke-width="0.9" />
<line x1="656.7239999999999" y1="160" x2="656.7239999999999" y2="163" stroke="#000" stroke-width="0.9" />
<line x1="661.15" y1="160" x2="661.15" y2="163" stroke="#000" stroke-width="0.9" />
<line x1="665.576" y1="160" x2="665.576" y2="163" stroke="#000" stroke-width="0.9" />
<line x1="670.002" y1="160" x2="670.002" y2="163" stroke="#000" stroke-width="0.9" />
<line x1="674.4279999999999" y1="160" x2="674.4279999999999" y2="163" stroke="#000" stroke-width="0.9" />
<line x1="678.854" y1="160" x2="678.854" y2="163" stroke="#000" stroke-width="0.9" />
<line x1="683.28" y1="160" x2="683.28" y2="165" stroke="#000" stroke-width="1.1" />
<line x1="687.7059999999999" y1="160" x2="687.7059999999999" y2="163" stroke="#000" stroke-width="0.9" />
<line x1="692.132" y1="160" x2="692.132" y2="163" stroke="#000" stroke-width="0.9" />
<line x1="696.558" y1="160" x2="696.558" y2="163" stroke="#000" stroke-width="0.9" />
<line x1="700.9839999999999" y1="160" x2="700.9839999999999" y2="163" stroke="#000" stroke-width="0.9" />
<line x1="705.41" y1="160" x2="705.41" y2="163" stroke="#000" stroke-width="0.9" />
<line x1="709.836" y1="160" x2="709.836" y2="163" stroke="#000" stroke-width="0.9" />
<line x1="714.262" y1="160" x2="714.262" y2="163" stroke="#000" stroke-width="0.9" />
<line x1="718.6879999999999" y1="160" x2="718.6879999999999" y2="163" stroke="#000" stroke-width="0.9" />
<line x1="723.114" y1="160" x2="723.114" y2="163" stroke="#000" stroke-width="0.9" />
<line x1="727.54" y1="160" x2="727.54" y2="165" stroke="#000" stroke-width="1.1" />
<line x1="731.9659999999999" y1="160" x2="731.9659999999999" y2="163" stroke="#000" stroke-width="0.9" />
<line x1="736.3919999999999" y1="160" x2="736.3919999999999" y2="163" stroke="#000" stroke-width="0.9" />
<line x1="740.818" y1="160" x2="740.818" y2="163" stroke="#000" stroke-width="0.9" />
<line x1="745.2439999999999" y1="160" x2="745.2439999999999" y2="163" stroke="#000" stroke-width="0.9" />
<line x1="749.67" y1="160" x2="749.67" y2="163" stroke="#000" stroke-width="0.9" />
<line x1="754.096" y1="160" x2="754.096" y2="163" stroke="#000" stroke-width="0.9" />
<line x1="758.5219999999999" y1="160" x2="758.5219999999999" y2="163" stroke="#000" stroke-width="0.9" />
<line x1="762.9479999999999" y1="160" x2="762.9479999999999" y2="163" stroke="#000" stroke-width="0.9" />
<line x1="767.374" y1="160" x2="767.374" y2="163" stroke="#000" stroke-width="0.9" />
<line x1="771.8" y1="160" x2="771.8" y2="165" stroke="#000" stroke-width="1.1" />
<line x1="776.226" y1="160" x2="776.226" y2="163" stroke="#000" stroke-width="0.9" />
<line x1="780.6519999999999" y1="160" x2="780.6519999999999" y2="163" stroke="#000" stroke-width="0.9" />
<line x1="785.078" y1="160" x2="785.078" y2="163" stroke="#000" stroke-width="0.9" />
<line x1="789.5039999999999" y1="160" x2="789.5039999999999" y2="163" stroke="#000" stroke-width="0.9" />
<line x1="793.9300000000001" y1="160" x2="793.9300000000001" y2="163" stroke="#000" stroke-width="0.9" />
<line x1="798.356" y1="160" x2="798.356" y2="163" stroke="#000" stroke-width="0.9" />
<line x1="802.7819999999999" y1="160" x2="802.7819999999999" y2="163" stroke="#000" stroke-width="0.9" />
<line x1="807.208" y1="160" x2="807.208" y2="163" stroke="#000" stroke-width="0.9" />
<line x1="811.634" y1="160" x2="811.634" y2="163" stroke="#000" stroke-width="0.9" />
<line x1="816.06" y1="160" x2="816.06" y2="165" stroke="#000" stroke-width="1.1" />
<line x1="820.4859999999999" y1="160" x2="820.4859999999999" y2="163" stroke="#000" stroke-width="0.9" />
<line x1="824.912" y1="160" x2="824.912" y2="163" stroke="#000" stroke-width="0.9" />
<line x1="829.338" y1="160" x2="829.338" y2="163" stroke="#000" stroke-width="0.9" />
<line x1="833.7639999999999" y1="160" x2="833.7639999999999" y2="163" stroke="#000" stroke-width="0.9" />
<line x1="838.1899999999999" y1="160" x2="838.1899999999999" y2="163" stroke="#000" stroke-width="0.9" />
<line x1="842.616" y1="160" x2="842.616" y2="163" stroke="#000" stroke-width="0.9" />
<line x1="847.0419999999999" y1="160" x2="847.0419999999999" y2="163" stroke="#000" stroke-width="0.9" />
<line x1="851.4679999999998" y1="160" x2="851.4679999999998" y2="163" stroke="#000" stroke-width="0.9" />
<line x1="855.894" y1="160" x2="855.894" y2="163" stroke="#000" stroke-width="0.9" />
<line x1="860.3199999999999" y1="160" x2="860.3199999999999" y2="165" stroke="#000" stroke-width="1.1" />
<line x1="864.7460000000001" y1="160" x2="864.7460000000001" y2="163" stroke="#000" stroke-width="0.9" />
<line x1="869.172" y1="160" x2="869.172" y2="163" stroke="#000" stroke-width="0.9" />
<line x1="873.598" y1="160" x2="873.598" y2="163" stroke="#000" stroke-width="0.9" />
<line x1="878.0239999999999" y1="160" x2="878.0239999999999" y2="163" stroke="#000" stroke-width="0.9" />
<line x1="882.45" y1="160" x2="882.45" y2="163" stroke="#000" stroke-width="0.9" />
<line x1="886.876" y1="160" x2="886.876" y2="163" stroke="#000" stroke-width="0.9" />
<line x1="891.3019999999999" y1="160" x2="891.3019999999999" y2="163" stroke="#000" stroke-width="0.9" />
<line x1="895.7280000000001" y1="160" x2="895.7280000000001" y2="163" stroke="#000" stroke-width="0.9" />
<line x1="900.154" y1="160" x2="900.154" y2="163" stroke="#000" stroke-width="0.9" />
<line x1="904.5799999999999" y1="160" x2="904.5799999999999" y2="165" stroke="#000" stroke-width="1.1" />
<line x1="909.0059999999999" y1="160" x2="909.0059999999999" y2="163" stroke="#000" stroke-width="0.9" />
<line x1="913.432" y1="160" x2="913.432" y2="163" stroke="#000" stroke-width="0.9" />
<line x1="917.858" y1="160" x2="917.858" y2="163" stroke="#000" stroke-width="0.9" />
<line x1="922.2840000000001" y1="160" x2="922.2840000000001" y2="163" stroke="#000" stroke-width="0.9" />
<line x1="926.71" y1="160" x2="926.71" y2="163" stroke="#000" stroke-width="0.9" />
<line x1="931.136" y1="160" x2="931.136" y2="163" stroke="#000" stroke-width="0.9" />
<line x1="935.5619999999999" y1="160" x2="935.5619999999999" y2="163" stroke="#000" stroke-width="0.9" />
<line x1="939.988" y1="160" x2="939.988" y2="163" stroke="#000" stroke-width="0.9" />
<line x1="944.414" y1="160" x2="944.414" y2="163" stroke="#000" stroke-width="0.9" />
<line x1="948.8399999999999" y1="160" x2="948.8399999999999" y2="165" stroke="#000" stroke-width="1.1" />
<line x1="953.2660000000001" y1="160" x2="953.2660000000001" y2="163" stroke="#000" stroke-width="0.9" />
<line x1="957.692" y1="160" x2="957.692" y2="163" stroke="#000" stroke-width="0.9" />
<line x1="962.1179999999999" y1="160" x2="962.1179999999999" y2="163" stroke="#000" stroke-width="0.9" />
<line x1="966.5439999999999" y1="160" x2="966.5439999999999" y2="163" stroke="#000" stroke-width="0.9" />
<line x1="970.97" y1="160" x2="970.97" y2="163" stroke="#000" stroke-width="0.9" />
<line x1="975.396" y1="160" x2="975.396" y2="163" stroke="#000" stroke-width="0.9" />
<line x1="979.8219999999999" y1="160" x2="979.8219999999999" y2="163" stroke="#000" stroke-width="0.9" />
<line x1="984.248" y1="160" x2="984.248" y2="163" stroke="#000" stroke-width="0.9" />
<line x1="988.674" y1="160" x2="988.674" y2="163" stroke="#000" stroke-width="0.9" />
<line x1="993.0999999999999" y1="160" x2="993.0999999999999" y2="165" stroke="#000" stroke-width="1.1" />
<line x1="997.5259999999998" y1="160" x2="997.5259999999998" y2="163" stroke="#000" stroke-width="0.9" />
<line x1="1001.952" y1="160" x2="1001.952" y2="163" stroke="#000" stroke-width="0.9" />
<line x1="1006.3779999999999" y1="160" x2="1006.3779999999999" y2="163" stroke="#000" stroke-width="0.9" />
<line x1="1010.8040000000001" y1="160" x2="1010.8040000000001" y2="163" stroke="#000" stroke-width="0.9" />
<line x1="1015.23" y1="160" x2="1015.23" y2="163" stroke="#000" stroke-width="0.9" />
<line x1="1019.656" y1="160" x2="1019.656" y2="163" stroke="#000" stroke-width="0.9" />
<line x1="1024.0819999999999" y1="160" x2="1024.0819999999999" y2="163" stroke="#000" stroke-width="0.9" />
<line x1="1028.508" y1="160" x2="1028.508" y2="163" stroke="#000" stroke-width="0.9" />
<line x1="1032.934" y1="160" x2="1032.934" y2="163" stroke="#000" stroke-width="0.9" />
<line x1="1037.36" y1="160" x2="1037.36" y2="165" stroke="#000" stroke-width="1.1" />
<line x1="1041.786" y1="160" x2="1041.786" y2="163" stroke="#000" stroke-width="0.9" />
<line x1="1046.212" y1="160" x2="1046.212" y2="163" stroke="#000" stroke-width="0.9" />
<line x1="1050.638" y1="160" x2="1050.638" y2="163" stroke="#000" stroke-width="0.9" />
<line x1="1055.0639999999999" y1="160" x2="1055.0639999999999" y2="163" stroke="#000" stroke-width="0.9" />
<line x1="1059.49" y1="160" x2="1059.49" y2="163" stroke="#000" stroke-width="0.9" />
<line x1="1063.916" y1="160" x2="1063.916" y2="163" stroke="#000" stroke-width="0.9" />
<line x1="1068.342" y1="160" x2="1068.342" y2="163" stroke="#000" stroke-width="0.9" />
<line x1="1072.768" y1="160" x2="1072.768" y2="163" stroke="#000" stroke-width="0.9" />
<line x1="1077.194" y1="160" x2="1077.194" y2="163" stroke="#000" stroke-width="0.9" />
<line x1="1081.62" y1="160" x2="1081.62" y2="165" stroke="#000" stroke-width="1.1" />
<line x1="1086.046" y1="160" x2="1086.046" y2="163" stroke="#000" stroke-width="0.9" />
<line x1="1090.472" y1="160" x2="1090.472" y2="163" stroke="#000" stroke-width="0.9" />
<line x1="1094.898" y1="160" x2="1094.898" y2="163" stroke="#000" stroke-width="0.9" />
<line x1="1099.324" y1="160" x2="1099.324" y2="163" stroke="#000" stroke-width="0.9" />
<line x1="324.774" y1="160" x2="324.774" y2="163" stroke="#000" stroke-width="0.9" />
<line x1="320.348" y1="160" x2="320.348" y2="163" stroke="#000" stroke-width="0.9" />
<text x="329.59999999999997" y="175.5" font-size="8.7" font-weight="normal" fill="#000" text-anchor="middle" textLength="22.2" lengthAdjust="spacingAndGlyphs" stroke="#000" stroke-width="0.25" >00:00</text>
<text x="373.85999999999996" y="175.5" font-size="8.7" font-weight="normal" fill="#000" text-anchor="middle" textLength="22.2" lengthAdjust="spacingAndGlyphs" stroke="#000" stroke-width="0.25" >00:30</text>
<text x="418.11999999999995" y="175.5" font-size="8.7" font-weight="normal" fill="#000" text-anchor="middle" textLength="22.2" lengthAdjust="spacingAndGlyphs" stroke="#000" stroke-width="0.25" >01:00</text>
<text x="462.38" y="175.5" font-size="8.7" font-weight="normal" fill="#000" text-anchor="middle" textLength="22.2" lengthAdjust="spacingAndGlyphs" stroke="#000" stroke-width="0.25" >01:30</text>
<text x="506.64" y="175.5" font-size="8.7" font-weight="normal" fill="#000" text-anchor="middle" textLength="22.2" lengthAdjust="spacingAndGlyphs" stroke="#000" stroke-width="0.25" >02:00</text>
<text x="550.9" y="175.5" font-size="8.7" font-weight="normal" fill="#000" text-anchor="middle" textLength="22.2" lengthAdjust="spacingAndGlyphs" stroke="#000" stroke-width="0.25" >02:30</text>
<text x="595.16" y="175.5" font-size="8.7" font-weight="normal" fill="#000" text-anchor="middle" textLength="22.2" lengthAdjust="spacingAndGlyphs" stroke="#000" stroke-width="0.25" >03:00</text>
<text x="639.42" y="175.5" font-size="8.7" font-weight="normal" fill="#000" text-anchor="middle" textLength="22.2" lengthAdjust="spacingAndGlyphs" stroke="#000" stroke-width="0.25" >03:30</text>
<text x="683.68" y="175.5" font-size="8.7" font-weight="normal" fill="#000" text-anchor="middle" textLength="22.2" lengthAdjust="spacingAndGlyphs" stroke="#000" stroke-width="0.25" >04:00</text>
<text x="727.9399999999999" y="175.5" font-size="8.7" font-weight="normal" fill="#000" text-anchor="middle" textLength="22.2" lengthAdjust="spacingAndGlyphs" stroke="#000" stroke-width="0.25" >04:30</text>
<text x="772.1999999999999" y="175.5" font-size="8.7" font-weight="normal" fill="#000" text-anchor="middle" textLength="22.2" lengthAdjust="spacingAndGlyphs" stroke="#000" stroke-width="0.25" >05:00</text>
<text x="816.4599999999999" y="175.5" font-size="8.7" font-weight="normal" fill="#000" text-anchor="middle" textLength="22.2" lengthAdjust="spacingAndGlyphs" stroke="#000" stroke-width="0.25" >05:30</text>
<text x="860.7199999999999" y="175.5" font-size="8.7" font-weight="normal" fill="#000" text-anchor="middle" textLength="22.2" lengthAdjust="spacingAndGlyphs" stroke="#000" stroke-width="0.25" >06:00</text>
<text x="904.9799999999999" y="175.5" font-size="8.7" font-weight="normal" fill="#000" text-anchor="middle" textLength="22.2" lengthAdjust="spacingAndGlyphs" stroke="#000" stroke-width="0.25" >06:30</text>
<text x="949.2399999999999" y="175.5" font-size="8.7" font-weight="normal" fill="#000" text-anchor="middle" textLength="22.2" lengthAdjust="spacingAndGlyphs" stroke="#000" stroke-width="0.25" >07:00</text>
<text x="993.4999999999999" y="175.5" font-size="8.7" font-weight="normal" fill="#000" text-anchor="middle" textLength="22.2" lengthAdjust="spacingAndGlyphs" stroke="#000" stroke-width="0.25" >07:30</text>
<text x="1037.76" y="175.5" font-size="8.7" font-weight="normal" fill="#000" text-anchor="middle" textLength="22.2" lengthAdjust="spacingAndGlyphs" stroke="#000" stroke-width="0.25" >08:00</text>
<text x="1082.02" y="175.5" font-size="8.7" font-weight="normal" fill="#000" text-anchor="middle" textLength="22.2" lengthAdjust="spacingAndGlyphs" stroke="#000" stroke-width="0.25" >08:30</text>
<text transform="translate(265.6,109.2) rotate(-90)" font-size="10.5" font-weight="bold" stroke="#000" stroke-width="0.35" text-anchor="middle" textLength="55" lengthAdjust="spacingAndGlyphs">Event Flags</text>
<defs><radialGradient id="pinhead" cx="0.55" cy="0.45" r="0.6"><stop offset="0" stop-color="#ffffff"/><stop offset="0.3" stop-color="#b8f8b8"/><stop offset="0.7" stop-color="#22d022"/><stop offset="1" stop-color="#10a010"/></radialGradient>
<radialGradient id="pinbody" cx="0.4" cy="0.4" r="0.7"><stop offset="0" stop-color="#50d850"/><stop offset="1" stop-color="#0f9a0f"/></radialGradient></defs>
<line x1="269.3" y1="63.5" x2="273.5" y2="59" stroke="#6a6a6a" stroke-width="1.3"/>
<ellipse cx="276.2" cy="54.8" rx="7.2" ry="6.6" transform="rotate(40 276.2 54.8)" fill="url(#pinbody)"/>
<path d="M275,50 L281,56 L285,50 L280,45 Z" fill="#1cb81c"/>
<ellipse cx="284.2" cy="46.2" rx="8" ry="5.8" transform="rotate(40 284.2 46.2)" fill="#18b818"/>
<ellipse cx="285" cy="45.6" rx="6.4" ry="4.4" transform="rotate(40 285 45.6)" fill="url(#pinhead)"/>

<text x="321" y="191.8" font-size="8.5" font-weight="normal" fill="#000" text-anchor="start" textLength="178" lengthAdjust="spacingAndGlyphs" stroke="#000" stroke-width="0.25" >Duration 00:12:35 AHI 33.35 Flow Rate: 13.28</text>
<path d="M323.6,201.23 H1099 M323.6,207.87 H1099 M323.6,214.50 H1099 M323.6,221.14 H1099 M323.6,227.78 H1099 M323.6,234.41 H1099 M323.6,241.05 H1099 M323.6,247.68 H1099 M323.6,254.31 H1099 M323.6,260.95 H1099 M323.6,267.59 H1099 M323.6,274.22 H1099 M323.6,280.86 H1099 M323.6,287.49 H1099 M323.6,294.12 H1099 M323.6,300.76 H1099 M323.6,307.39 H1099 M323.6,314.03 H1099 M323.6,320.67 H1099" stroke="#ececec" stroke-width="0.8" fill="none"/>
<line x1="506" y1="195" x2="506" y2="327" stroke="#ececec" stroke-width="0.8" />
<line x1="320.6" y1="201.4" x2="1102" y2="201.4" stroke="#2a7a2a" stroke-width="0.9" stroke-dasharray="1.5,1.5"/>
<line x1="320.6" y1="313.3" x2="1102" y2="313.3" stroke="#2a7a2a" stroke-width="0.9" stroke-dasharray="1.5,1.5"/>
<text transform="translate(265,265) rotate(-90)" font-size="10.5" font-weight="bold" stroke="#000" stroke-width="0.35" text-anchor="middle" textLength="46" lengthAdjust="spacingAndGlyphs">Flow Rate</text>
<path d="M320.6,267.0 L321.8,251.8 L322.8,277.9 L323.8,265.1 L324.8,264.6 L325.9,250.4 L326.8,279.5 L327.7,263.6 L328.7,270.3 L329.8,250.4 L330.7,276.5 L331.6,267.8 L332.6,267.4 L333.8,247.7 L334.9,276.7 L335.9,262.6 L337.0,266.0 L338.1,247.0 L339.0,278.8 L339.9,265.4 L340.9,267.1 L342.1,249.0 L343.1,279.7 L344.1,263.8 L345.2,267.3 L346.5,250.7 L347.6,279.9 L348.7,264.7 L349.9,268.4 L351.1,250.7 L352.0,278.6 L353.0,262.9 L354.0,270.4 L355.3,247.6 L356.4,277.7 L357.5,265.8 L358.7,268.8 L360.0,248.1 L361.1,279.6 L362.2,263.5 L363.4,264.7 L364.5,251.3 L365.4,280.9 L366.3,263.2 L367.3,267.5 L368.3,247.7 L369.2,292.0 L370.1,263.4 L371.1,266.1 L372.2,243.4 L373.1,284.6 L374.0,265.3 L375.0,266.1 L376.1,246.9 L377.1,285.2 L378.0,266.1 L379.0,264.6 L380.1,246.1 L381.0,284.2 L382.0,266.7 L382.9,265.4 L384.0,245.4 L385.0,282.5 L385.9,261.4 L386.9,266.6 L388.0,242.9 L388.9,283.5 L389.8,264.0 L390.7,264.9 L392.1,244.4 L393.2,284.6 L394.3,262.2 L395.4,270.0 L396.8,243.4 L397.9,281.4 L398.9,267.3 L400.1,268.1 L401.2,246.9 L402.2,282.9 L403.1,263.7 L404.1,267.0 L405.1,244.6 L406.0,283.0 L406.9,267.4 L407.8,263.9 L409.1,244.6 L410.1,283.0 L411.1,262.5 L412.2,269.9 L413.4,248.9 L414.4,277.8 L415.4,263.7 L416.5,263.1 L417.5,251.7 L418.4,272.1 L419.3,262.2 L420.3,266.6 L421.5,251.5 L422.5,275.6 L423.5,263.2 L424.6,263.3 L425.8,251.0 L426.9,271.4 L427.9,265.8 L429.0,266.0 L430.3,251.1 L431.3,273.4 L432.4,266.0 L433.5,266.8 L434.6,251.9 L435.6,272.5 L436.5,267.0 L437.5,264.8 L438.8,255.3 L439.9,273.8 L440.9,265.0 L442.0,266.8 L443.3,253.6 L444.5,273.3 L445.5,264.9 L446.7,262.8 L447.9,254.0 L449.0,272.5 L450.0,263.7 L451.1,266.2 L452.4,254.3 L453.5,271.5 L454.6,264.7 L455.8,263.6 L457.0,251.2 L458.0,273.1 L459.0,264.5 L460.0,264.4 L461.2,253.7 L462.2,272.3 L463.2,264.4 L464.2,263.3 L465.4,249.8 L466.3,277.3 L467.2,261.0 L468.2,266.9 L469.5,248.8 L470.7,281.7 L471.7,266.3 L472.9,270.0 L474.0,249.5 L475.0,282.5 L475.9,264.1 L476.8,269.9 L478.1,244.6 L479.1,282.3 L480.1,265.9 L481.2,268.7 L482.4,243.3 L483.5,282.3 L484.5,264.8 L485.6,266.3 L486.8,244.3 L487.7,284.1 L488.6,265.9 L489.6,270.9 L490.9,240.4 L492.1,282.8 L493.2,261.6 L493.2,262.0 L494.3,229.5 L495.4,272.0 L497.0,268.0 L499.0,266.5 L501.0,268.0 L503.0,266.0 L505.5,266.0 L507.6,231.0 L508.7,304.0 L510.2,270.0 L511.5,264.0 L512.0,252.4 L513.2,223.2 L514.3,281.3 L515.3,250.9 L516.5,252.5 L517.6,225.8 L518.6,279.0 L519.6,249.1 L520.7,261.7 L521.9,225.7 L522.9,281.2 L524.0,255.4 L525.0,252.6 L526.3,225.7 L527.4,279.5 L528.4,252.8 L529.5,260.5 L530.7,225.0 L531.8,280.3 L532.8,253.1 L534.0,264.2 L535.2,226.2 L536.2,282.3 L537.2,253.0 L538.3,261.6 L539.6,226.3 L540.8,280.8 L541.8,257.7 L543.0,265.0 L544.2,230.9 L545.2,282.3 L546.1,255.6 L547.1,261.4 L548.4,230.9 L549.4,282.4 L550.4,256.2 L551.5,262.0 L552.6,232.3 L553.6,283.1 L554.5,258.8 L555.5,258.1 L556.6,232.8 L557.6,280.3 L558.5,257.6 L559.6,265.3 L560.8,232.8 L561.8,278.9 L562.8,256.0 L563.9,258.1 L565.1,233.6 L566.2,282.3 L567.3,255.4 L568.4,267.1 L569.6,236.5 L570.6,281.8 L571.6,259.1 L572.7,259.7 L574.0,234.5 L575.1,280.8 L576.2,258.6 L577.4,261.2 L578.6,238.4 L579.7,280.3 L580.7,258.5 L581.8,267.5 L583.1,237.1 L584.2,280.9 L585.2,260.7 L586.4,263.4 L587.6,242.4 L588.6,277.4 L589.6,257.1 L590.7,263.9 L592.0,243.7 L593.2,277.7 L594.3,260.8 L595.4,265.1 L596.7,249.8 L597.8,272.8 L598.8,262.7 L599.9,265.2 L601.0,248.5 L602.0,272.6 L602.9,263.9 L603.9,265.3 L605.1,249.4 L606.1,273.0 L607.1,259.7 L608.1,263.5 L609.4,250.3 L610.5,270.7 L611.5,259.9 L612.7,262.7 L613.8,250.7 L614.8,272.4 L615.7,262.8 L616.8,262.6 L617.9,253.1 L618.8,270.8 L619.8,261.1 L620.8,263.5 L622.0,251.7 L623.0,271.6 L624.0,261.6 L625.0,264.9 L626.3,254.6 L627.4,269.8 L628.5,264.4 L629.7,262.3 L631.0,252.2 L632.1,272.9 L633.1,264.4 L634.3,261.9 L635.6,251.9 L636.7,272.0 L637.8,259.4 L639.0,263.3 L640.2,254.2 L641.3,269.4 L642.4,263.2 L643.5,269.1 L644.6,247.0 L645.5,281.8 L646.4,260.8 L647.3,265.6 L648.5,243.8 L649.5,283.9 L650.5,262.6 L651.6,266.5 L652.6,241.4 L653.6,284.3 L654.4,260.0 L655.4,270.0 L656.5,239.6 L657.5,287.7 L658.4,259.4 L659.3,265.9 L660.4,236.8 L661.3,287.2 L662.2,263.2 L663.1,268.2 L664.3,237.8 L665.4,283.7 L666.3,263.6 L667.4,263.5 L668.5,239.2 L669.4,285.0 L670.3,260.5 L671.3,267.4 L672.5,240.5 L673.5,286.4 L674.5,262.8 L675.6,270.8 L676.8,239.6 L677.9,284.9 L678.9,263.7 L680.0,269.0 L681.1,243.4 L682.1,282.6 L683.0,263.1 L684.0,266.8 L685.3,248.2 L686.4,277.1 L687.5,262.8 L688.6,260.3 L689.9,249.3 L691.0,272.9 L692.0,260.0 L693.1,264.6 L694.3,249.6 L695.4,274.1 L696.4,261.6 L697.5,265.5 L698.7,252.1 L699.8,270.6 L700.8,262.9 L701.9,268.2 L703.2,247.3 L704.2,279.1 L705.3,265.7 L706.4,267.9 L707.5,237.8 L708.5,287.8 L709.4,262.7 L710.4,275.0 L711.5,238.5 L712.5,290.2 L713.4,266.3 L714.4,270.8 L715.7,238.4 L716.8,289.1 L717.9,266.2 L719.1,266.4 L720.2,235.5 L721.1,289.6 L722.0,265.1 L722.9,266.3 L724.1,239.0 L725.2,286.8 L726.2,261.8 L727.3,263.2 L728.4,237.7 L729.4,285.4 L730.4,262.0 L731.4,261.2 L732.5,236.4 L733.5,282.6 L734.4,261.4 L735.4,270.5 L736.6,240.7 L737.6,280.9 L738.5,265.2 L739.6,269.9 L740.6,241.3 L741.5,281.2 L742.4,261.9 L743.4,269.5 L744.6,244.3 L745.6,279.7 L746.6,265.0 L747.7,261.8 L748.9,252.0 L749.9,272.3 L750.9,259.1 L752.0,262.9 L753.2,251.7 L754.2,272.8 L755.2,260.2 L756.3,266.0 L757.5,253.2 L758.5,272.3 L759.5,264.6 L760.6,264.8 L761.9,250.3 L763.0,274.1 L764.0,262.5 L765.1,264.2 L766.3,252.8 L767.2,272.9 L768.2,262.8 L769.2,265.6 L770.5,250.9 L771.6,274.9 L772.6,263.9 L773.7,264.1 L774.8,251.0 L775.7,272.6 L776.6,259.7 L777.5,263.8 L778.7,250.2 L779.7,273.8 L780.7,262.4 L781.8,270.2 L783.0,243.3 L783.9,283.5 L784.9,266.5 L785.9,272.5 L787.0,241.4 L787.9,291.5 L788.8,263.4 L789.7,271.2 L790.9,241.6 L791.9,289.6 L792.9,267.4 L793.9,269.0 L795.0,241.8 L796.0,290.7 L797.0,264.8 L798.0,270.7 L799.1,239.1 L800.0,286.2 L800.9,266.1 L801.8,265.9 L803.1,243.1 L804.1,285.2 L805.1,265.2 L806.3,266.3 L807.3,245.4 L808.2,285.5 L809.1,262.6 L810.1,270.5 L811.2,244.4 L812.2,282.3 L813.2,266.0 L814.2,271.5 L815.5,247.4 L816.6,283.2 L817.7,265.3 L818.9,266.0 L820.0,248.4 L821.0,284.2 L821.9,264.0 L822.9,265.5 L824.1,247.0 L825.1,281.1 L826.0,264.9 L827.0,265.8 L828.3,249.4 L829.4,281.3 L830.5,266.4 L831.6,267.5 L832.9,245.8 L834.0,281.0 L835.1,264.6 L836.2,267.9 L837.6,248.8 L838.7,278.6 L839.8,266.4 L841.0,262.9 L842.0,248.1 L842.9,281.8 L843.8,263.5 L844.8,265.6 L845.9,247.7 L846.8,278.9 L847.7,266.1 L848.7,270.2 L849.9,246.9 L850.9,278.9 L851.9,265.7 L852.9,269.2 L854.1,249.1 L855.1,279.8 L856.1,263.7 L857.2,268.7 L858.5,250.6 L859.6,279.3 L860.6,266.4 L861.8,268.2 L863.1,249.9 L864.2,278.1 L865.3,264.0 L866.5,264.6 L867.7,251.1 L868.7,279.1 L869.6,261.3 L870.7,263.2 L871.8,251.7 L872.7,275.8 L873.6,262.5 L874.6,263.7 L875.7,255.2 L876.6,270.6 L877.5,263.7 L878.5,264.7 L879.7,251.7 L880.7,270.3 L881.7,263.2 L882.8,263.9 L883.9,253.7 L884.9,270.8 L885.8,262.7 L886.8,266.1 L887.9,252.2 L888.8,272.2 L889.7,263.7 L890.7,266.3 L891.8,251.2 L892.8,275.0 L893.7,266.4 L894.7,268.2 L895.9,241.0 L896.9,284.0 L897.9,261.6 L898.9,267.7 L900.1,242.0 L901.2,284.2 L902.1,261.7 L903.2,268.1 L904.3,242.4 L905.2,283.4 L906.0,263.5 L907.0,268.7 L908.1,242.2 L909.0,281.1 L909.9,262.1 L910.9,265.2 L912.1,242.0 L913.1,282.4 L914.2,266.0 L915.2,264.3 L916.3,244.5 L917.2,283.8 L918.1,263.0 L919.0,269.6 L920.2,242.9 L921.3,282.4 L922.3,262.5 L923.5,269.8 L924.8,244.3 L925.9,282.3 L926.9,260.7 L928.1,263.4 L929.4,243.2 L930.5,283.0 L931.5,264.2 L932.7,266.2 L933.8,241.1 L934.8,282.1 L935.7,264.0 L936.7,267.1 L937.9,241.3 L938.9,282.5 L939.8,266.4 L940.8,268.9 L941.5,262.0 L942.1,240.6 L942.5,248.0 L943.2,282.5 L943.5,272.0 L944.3,262.5 L944.8,239.0 L945.6,292.0 L946.8,276.0 L949.0,275.0 L951.0,274.5 L953.0,273.0 L954.5,270.0 L955.5,264.2 L956.7,225.9 L957.7,285.2 L958.7,254.4 L959.8,258.2 L961.0,227.7 L962.1,282.9 L963.1,254.6 L964.2,263.6 L965.3,227.8 L966.3,280.8 L967.3,255.6 L968.3,264.2 L969.6,230.6 L970.8,280.7 L971.9,254.1 L973.0,256.2 L974.1,230.8 L975.0,281.9 L975.9,254.3 L976.9,257.6 L978.2,228.8 L979.3,279.8 L980.4,254.7 L981.5,260.7 L982.7,234.5 L983.7,280.7 L984.6,256.8 L985.7,262.4 L986.9,234.0 L988.0,280.3 L989.1,256.8 L990.2,264.6 L991.3,237.3 L992.3,282.2 L993.3,259.7 L994.3,259.4 L995.4,236.9 L996.3,281.0 L997.2,258.4 L998.1,262.3 L999.3,242.5 L1000.3,280.0 L1001.3,263.0 L1002.3,262.2 L1003.7,242.3 L1004.8,279.0 L1005.8,262.7 L1007.0,263.5 L1008.3,248.1 L1009.5,278.7 L1010.6,265.0 L1011.8,265.9 L1013.0,252.3 L1014.0,273.2 L1015.0,264.8 L1016.1,266.2 L1017.3,254.4 L1018.3,273.8 L1019.2,268.7 L1020.2,267.5 L1021.3,255.5 L1022.2,273.9 L1023.1,265.0 L1024.1,266.3 L1025.4,257.1 L1026.5,273.7 L1027.6,268.1 L1028.8,268.1 L1029.9,254.8 L1030.9,273.3 L1031.8,264.6 L1032.8,267.5 L1034.0,252.3 L1035.0,272.9 L1036.0,265.7 L1037.1,265.5 L1038.3,249.9 L1039.4,279.4 L1040.4,264.1 L1041.5,263.1 L1042.8,245.7 L1043.9,279.9 L1044.9,262.0 L1046.1,266.7 L1047.3,246.7 L1048.3,279.6 L1049.3,262.3 L1050.4,269.8 L1051.6,246.6 L1052.7,280.1 L1053.7,263.4 L1054.8,269.4 L1056.0,245.8 L1057.0,283.5 L1057.9,265.4 L1059.0,268.3 L1060.2,246.5 L1061.2,284.6 L1062.2,265.7 L1063.2,268.2 L1064.4,245.1 L1065.5,283.0 L1066.5,267.7 L1067.6,268.4 L1068.7,246.0 L1069.7,284.4 L1070.6,263.4 L1071.6,264.0 L1072.9,245.4 L1074.0,280.4 L1075.0,263.3 L1076.1,267.2 L1077.3,243.0 L1078.3,282.9 L1079.3,262.4 L1080.4,270.0 L1081.5,243.9 L1082.5,280.1 L1083.4,266.0 L1084.4,266.2 L1085.7,244.8 L1086.7,283.3 L1087.7,266.4 L1088.8,265.8 L1090.1,243.7 L1091.1,283.3 L1092.1,265.6 L1093.2,264.9 L1094.5,244.6 L1095.6,281.1 L1096.7,260.7 L1097.9,268.9 L1099.2,245.5 L1100.3,281.4 L1101.4,263.2" stroke="#000" stroke-width="1.05" fill="none" stroke-linejoin="bevel"/>
<rect x="647" y="194.6" width="197.5" height="132.70000000000002" fill="#8ee88e" opacity="0.5"/>
<line x1="499.3" y1="214.2" x2="499.3" y2="307.7" stroke="#30b8f0" stroke-width="1.2" />
<rect x="497.8" y="212.6" width="3" height="3" fill="#30b8f0" />
<text x="499.3" y="209.2" font-size="8" font-weight="normal" fill="#000" text-anchor="middle" stroke="#000" stroke-width="0.25" >OA</text>
<line x1="623.7" y1="214.2" x2="623.7" y2="307.7" stroke="#30b8f0" stroke-width="1.2" />
<rect x="622.2" y="212.6" width="3" height="3" fill="#30b8f0" />
<text x="623.7" y="209.2" font-size="8" font-weight="normal" fill="#000" text-anchor="middle" stroke="#000" stroke-width="0.25" >OA</text>
<line x1="1028.8" y1="214.2" x2="1028.8" y2="307.7" stroke="#30b8f0" stroke-width="1.2" />
<rect x="1027.3" y="212.6" width="3" height="3" fill="#30b8f0" />
<text x="1028.8" y="209.2" font-size="8" font-weight="normal" fill="#000" text-anchor="middle" stroke="#000" stroke-width="0.25" >OA</text>
<line x1="674.4" y1="214.2" x2="674.4" y2="307.7" stroke="#3a64e0" stroke-width="1.2" />
<rect x="672.9" y="212.6" width="3" height="3" fill="#3a64e0" />
<text x="674.4" y="209.2" font-size="8" font-weight="normal" fill="#000" text-anchor="middle" stroke="#000" stroke-width="0.25" >H</text>
<line x1="743.7" y1="214.2" x2="743.7" y2="307.7" stroke="#3a64e0" stroke-width="1.2" />
<rect x="742.2" y="212.6" width="3" height="3" fill="#3a64e0" />
<text x="743.7" y="209.2" font-size="8" font-weight="normal" fill="#000" text-anchor="middle" stroke="#000" stroke-width="0.25" >H</text>
<line x1="812.1" y1="214.2" x2="812.1" y2="307.7" stroke="#3a64e0" stroke-width="1.2" />
<rect x="810.6" y="212.6" width="3" height="3" fill="#3a64e0" />
<text x="812.1" y="209.2" font-size="8" font-weight="normal" fill="#000" text-anchor="middle" stroke="#000" stroke-width="0.25" >H</text>
<line x1="872.4" y1="214.2" x2="872.4" y2="307.7" stroke="#1a1ae8" stroke-width="1.2" />
<rect x="870.9" y="212.6" width="3" height="3" fill="#1a1ae8" />
<text x="872.4" y="209.2" font-size="8" font-weight="normal" fill="#000" text-anchor="middle" stroke="#000" stroke-width="0.25" >H</text>
<line x1="506" y1="195" x2="506" y2="205" stroke="#d04040" stroke-width="1.1" />
<rect x="320.6" y="194.6" width="781.4" height="132.70000000000002" fill="none" stroke="#000" stroke-width="1.2"/>
<line x1="320.6" y1="194.6" x2="320.6" y2="327.3" stroke="#000" stroke-width="1.2"/>
<path d="M317.10,194.60 h3.5 M318.60,201.23 h2 M318.60,207.87 h2 M318.60,214.50 h2 M317.10,221.14 h3.5 M318.60,227.78 h2 M318.60,234.41 h2 M318.60,241.05 h2 M317.10,247.68 h3.5 M318.60,254.31 h2 M318.60,260.95 h2 M318.60,267.59 h2 M317.10,274.22 h3.5 M318.60,280.86 h2 M318.60,287.49 h2 M318.60,294.12 h2 M317.10,300.76 h3.5 M318.60,307.39 h2 M318.60,314.03 h2 M318.60,320.67 h2 M317.10,327.30 h3.5" stroke="#000" stroke-width="1" fill="none"/>
<text x="314.6" y="199.5" font-size="8.7" font-weight="normal" fill="#000" text-anchor="end" stroke="#000" stroke-width="0.25" >55.0</text>
<text x="314.6" y="226.04" font-size="8.7" font-weight="normal" fill="#000" text-anchor="end" stroke="#000" stroke-width="0.25" >33.0</text>
<text x="314.6" y="252.58" font-size="8.7" font-weight="normal" fill="#000" text-anchor="end" stroke="#000" stroke-width="0.25" >11.0</text>
<text x="314.6" y="279.12" font-size="8.7" font-weight="normal" fill="#000" text-anchor="end" stroke="#000" stroke-width="0.25" >-11.0</text>
<text x="314.6" y="305.65999999999997" font-size="8.7" font-weight="normal" fill="#000" text-anchor="end" stroke="#000" stroke-width="0.25" >-33.0</text>
<text x="314.6" y="332.2" font-size="8.7" font-weight="normal" fill="#000" text-anchor="end" stroke="#000" stroke-width="0.25" >-55.0</text>
<line x1="320.6" y1="327.3" x2="1102" y2="327.3" stroke="#000" stroke-width="1.1"/>
<path d="M323.63,327.3 v3.5 M328.29,327.3 v3.5 M332.94,327.3 v3.5 M337.59,327.3 v3.5 M342.25,327.3 v3.5 M346.90,327.3 v6.5 M351.55,327.3 v3.5 M356.21,327.3 v3.5 M360.86,327.3 v3.5 M365.51,327.3 v3.5 M370.16,327.3 v3.5 M374.82,327.3 v3.5 M379.47,327.3 v3.5 M384.12,327.3 v3.5 M388.78,327.3 v3.5 M393.43,327.3 v6.5 M398.08,327.3 v3.5 M402.74,327.3 v3.5 M407.39,327.3 v3.5 M412.04,327.3 v3.5 M416.69,327.3 v3.5 M421.35,327.3 v3.5 M426.00,327.3 v3.5 M430.65,327.3 v3.5 M435.31,327.3 v3.5 M439.96,327.3 v6.5 M444.61,327.3 v3.5 M449.27,327.3 v3.5 M453.92,327.3 v3.5 M458.57,327.3 v3.5 M463.22,327.3 v3.5 M467.88,327.3 v3.5 M472.53,327.3 v3.5 M477.18,327.3 v3.5 M481.84,327.3 v3.5 M486.49,327.3 v6.5 M491.14,327.3 v3.5 M495.80,327.3 v3.5 M500.45,327.3 v3.5 M505.10,327.3 v3.5 M509.75,327.3 v3.5 M514.41,327.3 v3.5 M519.06,327.3 v3.5 M523.71,327.3 v3.5 M528.37,327.3 v3.5 M533.02,327.3 v6.5 M537.67,327.3 v3.5 M542.33,327.3 v3.5 M546.98,327.3 v3.5 M551.63,327.3 v3.5 M556.28,327.3 v3.5 M560.94,327.3 v3.5 M565.59,327.3 v3.5 M570.24,327.3 v3.5 M574.90,327.3 v3.5 M579.55,327.3 v6.5 M584.20,327.3 v3.5 M588.86,327.3 v3.5 M593.51,327.3 v3.5 M598.16,327.3 v3.5 M602.82,327.3 v3.5 M607.47,327.3 v3.5 M612.12,327.3 v3.5 M616.77,327.3 v3.5 M621.43,327.3 v3.5 M626.08,327.3 v6.5 M630.73,327.3 v3.5 M635.39,327.3 v3.5 M640.04,327.3 v3.5 M644.69,327.3 v3.5 M649.35,327.3 v3.5 M654.00,327.3 v3.5 M658.65,327.3 v3.5 M663.30,327.3 v3.5 M667.96,327.3 v3.5 M672.61,327.3 v6.5 M677.26,327.3 v3.5 M681.92,327.3 v3.5 M686.57,327.3 v3.5 M691.22,327.3 v3.5 M695.88,327.3 v3.5 M700.53,327.3 v3.5 M705.18,327.3 v3.5 M709.83,327.3 v3.5 M714.49,327.3 v3.5 M719.14,327.3 v6.5 M723.79,327.3 v3.5 M728.45,327.3 v3.5 M733.10,327.3 v3.5 M737.75,327.3 v3.5 M742.40,327.3 v3.5 M747.06,327.3 v3.5 M751.71,327.3 v3.5 M756.36,327.3 v3.5 M761.02,327.3 v3.5 M765.67,327.3 v6.5 M770.32,327.3 v3.5 M774.98,327.3 v3.5 M779.63,327.3 v3.5 M784.28,327.3 v3.5 M788.93,327.3 v3.5 M793.59,327.3 v3.5 M798.24,327.3 v3.5 M802.89,327.3 v3.5 M807.55,327.3 v3.5 M812.20,327.3 v6.5 M816.85,327.3 v3.5 M821.51,327.3 v3.5 M826.16,327.3 v3.5 M830.81,327.3 v3.5 M835.47,327.3 v3.5 M840.12,327.3 v3.5 M844.77,327.3 v3.5 M849.42,327.3 v3.5 M854.08,327.3 v3.5 M858.73,327.3 v6.5 M863.38,327.3 v3.5 M868.04,327.3 v3.5 M872.69,327.3 v3.5 M877.34,327.3 v3.5 M882.00,327.3 v3.5 M886.65,327.3 v3.5 M891.30,327.3 v3.5 M895.95,327.3 v3.5 M900.61,327.3 v3.5 M905.26,327.3 v6.5 M909.91,327.3 v3.5 M914.57,327.3 v3.5 M919.22,327.3 v3.5 M923.87,327.3 v3.5 M928.52,327.3 v3.5 M933.18,327.3 v3.5 M937.83,327.3 v3.5 M942.48,327.3 v3.5 M947.14,327.3 v3.5 M951.79,327.3 v6.5 M956.44,327.3 v3.5 M961.10,327.3 v3.5 M965.75,327.3 v3.5 M970.40,327.3 v3.5 M975.05,327.3 v3.5 M979.71,327.3 v3.5 M984.36,327.3 v3.5 M989.01,327.3 v3.5 M993.67,327.3 v3.5 M998.32,327.3 v6.5 M1002.97,327.3 v3.5 M1007.63,327.3 v3.5 M1012.28,327.3 v3.5 M1016.93,327.3 v3.5 M1021.59,327.3 v3.5 M1026.24,327.3 v3.5 M1030.89,327.3 v3.5 M1035.54,327.3 v3.5 M1040.20,327.3 v3.5 M1044.85,327.3 v6.5 M1049.50,327.3 v3.5 M1054.16,327.3 v3.5 M1058.81,327.3 v3.5 M1063.46,327.3 v3.5 M1068.12,327.3 v3.5 M1072.77,327.3 v3.5 M1077.42,327.3 v3.5 M1082.07,327.3 v3.5 M1086.73,327.3 v3.5 M1091.38,327.3 v6.5 M1096.03,327.3 v3.5 M1100.69,327.3 v3.5" stroke="#000" stroke-width="0.9" fill="none"/>
<text x="346.9" y="343.7" font-size="8.5" font-weight="normal" fill="#000" text-anchor="middle" textLength="34.2" lengthAdjust="spacingAndGlyphs" stroke="#000" stroke-width="0.25" >02:55:30</text>
<text x="393.42999999999995" y="343.7" font-size="8.5" font-weight="normal" fill="#000" text-anchor="middle" textLength="34.2" lengthAdjust="spacingAndGlyphs" stroke="#000" stroke-width="0.25" >02:56:15</text>
<text x="439.96" y="343.7" font-size="8.5" font-weight="normal" fill="#000" text-anchor="middle" textLength="34.2" lengthAdjust="spacingAndGlyphs" stroke="#000" stroke-width="0.25" >02:57:00</text>
<text x="486.49" y="343.7" font-size="8.5" font-weight="normal" fill="#000" text-anchor="middle" textLength="34.2" lengthAdjust="spacingAndGlyphs" stroke="#000" stroke-width="0.25" >02:57:45</text>
<text x="533.02" y="343.7" font-size="8.5" font-weight="normal" fill="#000" text-anchor="middle" textLength="34.2" lengthAdjust="spacingAndGlyphs" stroke="#000" stroke-width="0.25" >02:58:30</text>
<text x="579.55" y="343.7" font-size="8.5" font-weight="normal" fill="#000" text-anchor="middle" textLength="34.2" lengthAdjust="spacingAndGlyphs" stroke="#000" stroke-width="0.25" >02:59:15</text>
<text x="626.0799999999999" y="343.7" font-size="8.5" font-weight="normal" fill="#000" text-anchor="middle" textLength="34.2" lengthAdjust="spacingAndGlyphs" stroke="#000" stroke-width="0.25" >03:00:00</text>
<text x="672.61" y="343.7" font-size="8.5" font-weight="normal" fill="#000" text-anchor="middle" textLength="34.2" lengthAdjust="spacingAndGlyphs" stroke="#000" stroke-width="0.25" >03:00:45</text>
<text x="719.14" y="343.7" font-size="8.5" font-weight="normal" fill="#000" text-anchor="middle" textLength="34.2" lengthAdjust="spacingAndGlyphs" stroke="#000" stroke-width="0.25" >03:01:30</text>
<text x="765.67" y="343.7" font-size="8.5" font-weight="normal" fill="#000" text-anchor="middle" textLength="34.2" lengthAdjust="spacingAndGlyphs" stroke="#000" stroke-width="0.25" >03:02:15</text>
<text x="812.2" y="343.7" font-size="8.5" font-weight="normal" fill="#000" text-anchor="middle" textLength="34.2" lengthAdjust="spacingAndGlyphs" stroke="#000" stroke-width="0.25" >03:03:00</text>
<text x="858.73" y="343.7" font-size="8.5" font-weight="normal" fill="#000" text-anchor="middle" textLength="34.2" lengthAdjust="spacingAndGlyphs" stroke="#000" stroke-width="0.25" >03:03:45</text>
<text x="905.26" y="343.7" font-size="8.5" font-weight="normal" fill="#000" text-anchor="middle" textLength="34.2" lengthAdjust="spacingAndGlyphs" stroke="#000" stroke-width="0.25" >03:04:30</text>
<text x="951.79" y="343.7" font-size="8.5" font-weight="normal" fill="#000" text-anchor="middle" textLength="34.2" lengthAdjust="spacingAndGlyphs" stroke="#000" stroke-width="0.25" >03:05:15</text>
<text x="998.32" y="343.7" font-size="8.5" font-weight="normal" fill="#000" text-anchor="middle" textLength="34.2" lengthAdjust="spacingAndGlyphs" stroke="#000" stroke-width="0.25" >03:06:00</text>
<text x="1044.85" y="343.7" font-size="8.5" font-weight="normal" fill="#000" text-anchor="middle" textLength="34.2" lengthAdjust="spacingAndGlyphs" stroke="#000" stroke-width="0.25" >03:06:45</text>
<text x="1100.4" y="190.8" font-size="8.5" font-weight="normal" fill="#000" text-anchor="end" textLength="37" lengthAdjust="spacingAndGlyphs" stroke="#000" stroke-width="0.25" >Flow Rate</text>
<rect x="1048.4" y="186.3" width="13" height="2.8" fill="#000" />
<text x="1046.4" y="190.8" font-size="8.5" font-weight="normal" fill="#000" text-anchor="end" textLength="54" lengthAdjust="spacingAndGlyphs" stroke="#000" stroke-width="0.25" >Max Flow Rate</text>
<rect x="977.4000000000001" y="186.3" width="5.5" height="2.6" fill="#1a6a1a" />
<rect x="984.9000000000001" y="186.3" width="5.5" height="2.6" fill="#1a6a1a" />
<text x="975.4000000000001" y="190.8" font-size="8.5" font-weight="normal" fill="#000" text-anchor="end" textLength="52" lengthAdjust="spacingAndGlyphs" stroke="#000" stroke-width="0.25" >Min Flow Rate</text>
<rect x="908.4000000000001" y="186.3" width="5.5" height="2.6" fill="#1a6a1a" />
<rect x="915.9000000000001" y="186.3" width="5.5" height="2.6" fill="#1a6a1a" />
<rect x="320.6" y="362.7" width="781.4" height="111.30000000000001" fill="#fbfcf2" />
<path d="M323.6,381.25 H1099 M323.6,399.80 H1099 M323.6,418.35 H1099 M323.6,436.90 H1099 M323.6,455.45 H1099" stroke="#efefe4" stroke-width="0.8" fill="none"/>
<text x="321" y="358.4" font-size="8.5" font-weight="normal" fill="#000" text-anchor="start" textLength="124" lengthAdjust="spacingAndGlyphs" stroke="#000" stroke-width="0.25" >EPAP: 10.50 Pressure Set: 10.50</text>
<text transform="translate(265,421.7) rotate(-90)" font-size="10.5" font-weight="bold" stroke="#000" stroke-width="0.35" text-anchor="middle" textLength="43" lengthAdjust="spacingAndGlyphs">Pressure</text>
<polyline points="320.6,398 491.7,408.3 620,389.5 652,387.2 737,382.4" stroke="#2a9a2a" stroke-width="1.2" fill="none"/>
<polyline points="320.6,390.3 644.3,411.3 652.5,382.4 1102,382.4" stroke="#a01818" stroke-width="1.2" fill="none"/>
<rect x="320.6" y="362.7" width="781.4" height="111.30000000000001" fill="none" stroke="#000" stroke-width="1.2"/>
<line x1="320.6" y1="362.7" x2="320.6" y2="474" stroke="#000" stroke-width="1.2"/>
<path d="M317.10,362.70 h3.5 M318.60,370.12 h2 M318.60,377.54 h2 M318.60,384.96 h2 M318.60,392.38 h2 M317.10,399.80 h3.5 M318.60,407.22 h2 M318.60,414.64 h2 M318.60,422.06 h2 M318.60,429.48 h2 M317.10,436.90 h3.5 M318.60,444.32 h2 M318.60,451.74 h2 M318.60,459.16 h2 M318.60,466.58 h2 M317.10,474.00 h3.5" stroke="#000" stroke-width="1" fill="none"/>
<text x="314.6" y="367.59999999999997" font-size="8.7" font-weight="normal" fill="#000" text-anchor="end" stroke="#000" stroke-width="0.25" >11.00</text>
<text x="314.6" y="404.7" font-size="8.7" font-weight="normal" fill="#000" text-anchor="end" stroke="#000" stroke-width="0.25" >10.00</text>
<text x="314.6" y="441.79999999999995" font-size="8.7" font-weight="normal" fill="#000" text-anchor="end" stroke="#000" stroke-width="0.25" >9.00</text>
<text x="314.6" y="478.9" font-size="8.7" font-weight="normal" fill="#000" text-anchor="end" stroke="#000" stroke-width="0.25" >8.00</text>
<line x1="320.6" y1="474" x2="1102" y2="474" stroke="#000" stroke-width="1.1"/>
<path d="M323.63,474 v3.5 M328.29,474 v3.5 M332.94,474 v3.5 M337.59,474 v3.5 M342.25,474 v3.5 M346.90,474 v6.5 M351.55,474 v3.5 M356.21,474 v3.5 M360.86,474 v3.5 M365.51,474 v3.5 M370.16,474 v3.5 M374.82,474 v3.5 M379.47,474 v3.5 M384.12,474 v3.5 M388.78,474 v3.5 M393.43,474 v6.5 M398.08,474 v3.5 M402.74,474 v3.5 M407.39,474 v3.5 M412.04,474 v3.5 M416.69,474 v3.5 M421.35,474 v3.5 M426.00,474 v3.5 M430.65,474 v3.5 M435.31,474 v3.5 M439.96,474 v6.5 M444.61,474 v3.5 M449.27,474 v3.5 M453.92,474 v3.5 M458.57,474 v3.5 M463.22,474 v3.5 M467.88,474 v3.5 M472.53,474 v3.5 M477.18,474 v3.5 M481.84,474 v3.5 M486.49,474 v6.5 M491.14,474 v3.5 M495.80,474 v3.5 M500.45,474 v3.5 M505.10,474 v3.5 M509.75,474 v3.5 M514.41,474 v3.5 M519.06,474 v3.5 M523.71,474 v3.5 M528.37,474 v3.5 M533.02,474 v6.5 M537.67,474 v3.5 M542.33,474 v3.5 M546.98,474 v3.5 M551.63,474 v3.5 M556.28,474 v3.5 M560.94,474 v3.5 M565.59,474 v3.5 M570.24,474 v3.5 M574.90,474 v3.5 M579.55,474 v6.5 M584.20,474 v3.5 M588.86,474 v3.5 M593.51,474 v3.5 M598.16,474 v3.5 M602.82,474 v3.5 M607.47,474 v3.5 M612.12,474 v3.5 M616.77,474 v3.5 M621.43,474 v3.5 M626.08,474 v6.5 M630.73,474 v3.5 M635.39,474 v3.5 M640.04,474 v3.5 M644.69,474 v3.5 M649.35,474 v3.5 M654.00,474 v3.5 M658.65,474 v3.5 M663.30,474 v3.5 M667.96,474 v3.5 M672.61,474 v6.5 M677.26,474 v3.5 M681.92,474 v3.5 M686.57,474 v3.5 M691.22,474 v3.5 M695.88,474 v3.5 M700.53,474 v3.5 M705.18,474 v3.5 M709.83,474 v3.5 M714.49,474 v3.5 M719.14,474 v6.5 M723.79,474 v3.5 M728.45,474 v3.5 M733.10,474 v3.5 M737.75,474 v3.5 M742.40,474 v3.5 M747.06,474 v3.5 M751.71,474 v3.5 M756.36,474 v3.5 M761.02,474 v3.5 M765.67,474 v6.5 M770.32,474 v3.5 M774.98,474 v3.5 M779.63,474 v3.5 M784.28,474 v3.5 M788.93,474 v3.5 M793.59,474 v3.5 M798.24,474 v3.5 M802.89,474 v3.5 M807.55,474 v3.5 M812.20,474 v6.5 M816.85,474 v3.5 M821.51,474 v3.5 M826.16,474 v3.5 M830.81,474 v3.5 M835.47,474 v3.5 M840.12,474 v3.5 M844.77,474 v3.5 M849.42,474 v3.5 M854.08,474 v3.5 M858.73,474 v6.5 M863.38,474 v3.5 M868.04,474 v3.5 M872.69,474 v3.5 M877.34,474 v3.5 M882.00,474 v3.5 M886.65,474 v3.5 M891.30,474 v3.5 M895.95,474 v3.5 M900.61,474 v3.5 M905.26,474 v6.5 M909.91,474 v3.5 M914.57,474 v3.5 M919.22,474 v3.5 M923.87,474 v3.5 M928.52,474 v3.5 M933.18,474 v3.5 M937.83,474 v3.5 M942.48,474 v3.5 M947.14,474 v3.5 M951.79,474 v6.5 M956.44,474 v3.5 M961.10,474 v3.5 M965.75,474 v3.5 M970.40,474 v3.5 M975.05,474 v3.5 M979.71,474 v3.5 M984.36,474 v3.5 M989.01,474 v3.5 M993.67,474 v3.5 M998.32,474 v6.5 M1002.97,474 v3.5 M1007.63,474 v3.5 M1012.28,474 v3.5 M1016.93,474 v3.5 M1021.59,474 v3.5 M1026.24,474 v3.5 M1030.89,474 v3.5 M1035.54,474 v3.5 M1040.20,474 v3.5 M1044.85,474 v6.5 M1049.50,474 v3.5 M1054.16,474 v3.5 M1058.81,474 v3.5 M1063.46,474 v3.5 M1068.12,474 v3.5 M1072.77,474 v3.5 M1077.42,474 v3.5 M1082.07,474 v3.5 M1086.73,474 v3.5 M1091.38,474 v6.5 M1096.03,474 v3.5 M1100.69,474 v3.5" stroke="#000" stroke-width="0.9" fill="none"/>
<text x="346.9" y="488.3" font-size="8.5" font-weight="normal" fill="#000" text-anchor="middle" textLength="34.2" lengthAdjust="spacingAndGlyphs" stroke="#000" stroke-width="0.25" >02:55:30</text>
<text x="393.42999999999995" y="488.3" font-size="8.5" font-weight="normal" fill="#000" text-anchor="middle" textLength="34.2" lengthAdjust="spacingAndGlyphs" stroke="#000" stroke-width="0.25" >02:56:15</text>
<text x="439.96" y="488.3" font-size="8.5" font-weight="normal" fill="#000" text-anchor="middle" textLength="34.2" lengthAdjust="spacingAndGlyphs" stroke="#000" stroke-width="0.25" >02:57:00</text>
<text x="486.49" y="488.3" font-size="8.5" font-weight="normal" fill="#000" text-anchor="middle" textLength="34.2" lengthAdjust="spacingAndGlyphs" stroke="#000" stroke-width="0.25" >02:57:45</text>
<text x="533.02" y="488.3" font-size="8.5" font-weight="normal" fill="#000" text-anchor="middle" textLength="34.2" lengthAdjust="spacingAndGlyphs" stroke="#000" stroke-width="0.25" >02:58:30</text>
<text x="579.55" y="488.3" font-size="8.5" font-weight="normal" fill="#000" text-anchor="middle" textLength="34.2" lengthAdjust="spacingAndGlyphs" stroke="#000" stroke-width="0.25" >02:59:15</text>
<text x="626.0799999999999" y="488.3" font-size="8.5" font-weight="normal" fill="#000" text-anchor="middle" textLength="34.2" lengthAdjust="spacingAndGlyphs" stroke="#000" stroke-width="0.25" >03:00:00</text>
<text x="672.61" y="488.3" font-size="8.5" font-weight="normal" fill="#000" text-anchor="middle" textLength="34.2" lengthAdjust="spacingAndGlyphs" stroke="#000" stroke-width="0.25" >03:00:45</text>
<text x="719.14" y="488.3" font-size="8.5" font-weight="normal" fill="#000" text-anchor="middle" textLength="34.2" lengthAdjust="spacingAndGlyphs" stroke="#000" stroke-width="0.25" >03:01:30</text>
<text x="765.67" y="488.3" font-size="8.5" font-weight="normal" fill="#000" text-anchor="middle" textLength="34.2" lengthAdjust="spacingAndGlyphs" stroke="#000" stroke-width="0.25" >03:02:15</text>
<text x="812.2" y="488.3" font-size="8.5" font-weight="normal" fill="#000" text-anchor="middle" textLength="34.2" lengthAdjust="spacingAndGlyphs" stroke="#000" stroke-width="0.25" >03:03:00</text>
<text x="858.73" y="488.3" font-size="8.5" font-weight="normal" fill="#000" text-anchor="middle" textLength="34.2" lengthAdjust="spacingAndGlyphs" stroke="#000" stroke-width="0.25" >03:03:45</text>
<text x="905.26" y="488.3" font-size="8.5" font-weight="normal" fill="#000" text-anchor="middle" textLength="34.2" lengthAdjust="spacingAndGlyphs" stroke="#000" stroke-width="0.25" >03:04:30</text>
<text x="951.79" y="488.3" font-size="8.5" font-weight="normal" fill="#000" text-anchor="middle" textLength="34.2" lengthAdjust="spacingAndGlyphs" stroke="#000" stroke-width="0.25" >03:05:15</text>
<text x="998.32" y="488.3" font-size="8.5" font-weight="normal" fill="#000" text-anchor="middle" textLength="34.2" lengthAdjust="spacingAndGlyphs" stroke="#000" stroke-width="0.25" >03:06:00</text>
<text x="1044.85" y="488.3" font-size="8.5" font-weight="normal" fill="#000" text-anchor="middle" textLength="34.2" lengthAdjust="spacingAndGlyphs" stroke="#000" stroke-width="0.25" >03:06:45</text>
<text x="1100.4" y="358.6" font-size="8.5" font-weight="normal" fill="#000" text-anchor="end" textLength="20" lengthAdjust="spacingAndGlyphs" stroke="#000" stroke-width="0.25" >EPAP</text>
<rect x="1065.4" y="354.1" width="13" height="2.8" fill="#107010" />
<text x="1063.4" y="358.6" font-size="8.5" font-weight="normal" fill="#000" text-anchor="end" textLength="47" lengthAdjust="spacingAndGlyphs" stroke="#000" stroke-width="0.25" >Pressure Set</text>
<rect x="1001.4000000000001" y="354.1" width="13" height="2.8" fill="#8a1010" />
<path d="M323.6,518.50 H1099 M323.6,528.00 H1099 M323.6,537.50 H1099 M323.6,547.00 H1099 M323.6,556.50 H1099 M323.6,566.00 H1099 M323.6,575.50 H1099" stroke="#ececec" stroke-width="0.8" fill="none"/>
<text x="321" y="504" font-size="8.5" font-weight="normal" fill="#000" text-anchor="start" textLength="134" lengthAdjust="spacingAndGlyphs" stroke="#000" stroke-width="0.25" >Leak Rate: 3.29 Total Leaks: 35.29</text>
<text transform="translate(265,549.7) rotate(-90)" font-size="10.5" font-weight="bold" stroke="#000" stroke-width="0.35" text-anchor="middle" textLength="46" lengthAdjust="spacingAndGlyphs">Leak Rate</text>
<polyline points="320.6,566.7 368.3,561.7 492.3,584.3 618.2,557.5 741.4,547 866,568 1102,558" stroke="#2a8a2a" stroke-width="1.1" fill="none"/>
<rect x="320.6" y="509" width="781.4" height="76" fill="none" stroke="#000" stroke-width="1.2"/>
<line x1="320.6" y1="509" x2="320.6" y2="585" stroke="#000" stroke-width="1.2"/>
<path d="M317.10,509.00 h3.5 M318.60,513.75 h2 M318.60,518.50 h2 M318.60,523.25 h2 M317.10,528.00 h3.5 M318.60,532.75 h2 M318.60,537.50 h2 M318.60,542.25 h2 M317.10,547.00 h3.5 M318.60,551.75 h2 M318.60,556.50 h2 M318.60,561.25 h2 M317.10,566.00 h3.5 M318.60,570.75 h2 M318.60,575.50 h2 M318.60,580.25 h2 M317.10,585.00 h3.5" stroke="#000" stroke-width="1" fill="none"/>
<text x="314.6" y="513.9" font-size="8.7" font-weight="normal" fill="#000" text-anchor="end" stroke="#000" stroke-width="0.25" >14.0</text>
<text x="314.6" y="532.9" font-size="8.7" font-weight="normal" fill="#000" text-anchor="end" stroke="#000" stroke-width="0.25" >10.5</text>
<text x="314.6" y="551.9" font-size="8.7" font-weight="normal" fill="#000" text-anchor="end" stroke="#000" stroke-width="0.25" >7.0</text>
<text x="314.6" y="570.9" font-size="8.7" font-weight="normal" fill="#000" text-anchor="end" stroke="#000" stroke-width="0.25" >3.5</text>
<text x="314.6" y="589.9" font-size="8.7" font-weight="normal" fill="#000" text-anchor="end" stroke="#000" stroke-width="0.25" >0.0</text>
<line x1="320.6" y1="585" x2="1102" y2="585" stroke="#000" stroke-width="1.1"/>
<path d="M323.63,585 v3.5 M328.29,585 v3.5 M332.94,585 v3.5 M337.59,585 v3.5 M342.25,585 v3.5 M346.90,585 v6.5 M351.55,585 v3.5 M356.21,585 v3.5 M360.86,585 v3.5 M365.51,585 v3.5 M370.16,585 v3.5 M374.82,585 v3.5 M379.47,585 v3.5 M384.12,585 v3.5 M388.78,585 v3.5 M393.43,585 v6.5 M398.08,585 v3.5 M402.74,585 v3.5 M407.39,585 v3.5 M412.04,585 v3.5 M416.69,585 v3.5 M421.35,585 v3.5 M426.00,585 v3.5 M430.65,585 v3.5 M435.31,585 v3.5 M439.96,585 v6.5 M444.61,585 v3.5 M449.27,585 v3.5 M453.92,585 v3.5 M458.57,585 v3.5 M463.22,585 v3.5 M467.88,585 v3.5 M472.53,585 v3.5 M477.18,585 v3.5 M481.84,585 v3.5 M486.49,585 v6.5 M491.14,585 v3.5 M495.80,585 v3.5 M500.45,585 v3.5 M505.10,585 v3.5 M509.75,585 v3.5 M514.41,585 v3.5 M519.06,585 v3.5 M523.71,585 v3.5 M528.37,585 v3.5 M533.02,585 v6.5 M537.67,585 v3.5 M542.33,585 v3.5 M546.98,585 v3.5 M551.63,585 v3.5 M556.28,585 v3.5 M560.94,585 v3.5 M565.59,585 v3.5 M570.24,585 v3.5 M574.90,585 v3.5 M579.55,585 v6.5 M584.20,585 v3.5 M588.86,585 v3.5 M593.51,585 v3.5 M598.16,585 v3.5 M602.82,585 v3.5 M607.47,585 v3.5 M612.12,585 v3.5 M616.77,585 v3.5 M621.43,585 v3.5 M626.08,585 v6.5 M630.73,585 v3.5 M635.39,585 v3.5 M640.04,585 v3.5 M644.69,585 v3.5 M649.35,585 v3.5 M654.00,585 v3.5 M658.65,585 v3.5 M663.30,585 v3.5 M667.96,585 v3.5 M672.61,585 v6.5 M677.26,585 v3.5 M681.92,585 v3.5 M686.57,585 v3.5 M691.22,585 v3.5 M695.88,585 v3.5 M700.53,585 v3.5 M705.18,585 v3.5 M709.83,585 v3.5 M714.49,585 v3.5 M719.14,585 v6.5 M723.79,585 v3.5 M728.45,585 v3.5 M733.10,585 v3.5 M737.75,585 v3.5 M742.40,585 v3.5 M747.06,585 v3.5 M751.71,585 v3.5 M756.36,585 v3.5 M761.02,585 v3.5 M765.67,585 v6.5 M770.32,585 v3.5 M774.98,585 v3.5 M779.63,585 v3.5 M784.28,585 v3.5 M788.93,585 v3.5 M793.59,585 v3.5 M798.24,585 v3.5 M802.89,585 v3.5 M807.55,585 v3.5 M812.20,585 v6.5 M816.85,585 v3.5 M821.51,585 v3.5 M826.16,585 v3.5 M830.81,585 v3.5 M835.47,585 v3.5 M840.12,585 v3.5 M844.77,585 v3.5 M849.42,585 v3.5 M854.08,585 v3.5 M858.73,585 v6.5 M863.38,585 v3.5 M868.04,585 v3.5 M872.69,585 v3.5 M877.34,585 v3.5 M882.00,585 v3.5 M886.65,585 v3.5 M891.30,585 v3.5 M895.95,585 v3.5 M900.61,585 v3.5 M905.26,585 v6.5 M909.91,585 v3.5 M914.57,585 v3.5 M919.22,585 v3.5 M923.87,585 v3.5 M928.52,585 v3.5 M933.18,585 v3.5 M937.83,585 v3.5 M942.48,585 v3.5 M947.14,585 v3.5 M951.79,585 v6.5 M956.44,585 v3.5 M961.10,585 v3.5 M965.75,585 v3.5 M970.40,585 v3.5 M975.05,585 v3.5 M979.71,585 v3.5 M984.36,585 v3.5 M989.01,585 v3.5 M993.67,585 v3.5 M998.32,585 v6.5 M1002.97,585 v3.5 M1007.63,585 v3.5 M1012.28,585 v3.5 M1016.93,585 v3.5 M1021.59,585 v3.5 M1026.24,585 v3.5 M1030.89,585 v3.5 M1035.54,585 v3.5 M1040.20,585 v3.5 M1044.85,585 v6.5 M1049.50,585 v3.5 M1054.16,585 v3.5 M1058.81,585 v3.5 M1063.46,585 v3.5 M1068.12,585 v3.5 M1072.77,585 v3.5 M1077.42,585 v3.5 M1082.07,585 v3.5 M1086.73,585 v3.5 M1091.38,585 v6.5 M1096.03,585 v3.5 M1100.69,585 v3.5" stroke="#000" stroke-width="0.9" fill="none"/>
<text x="346.9" y="599.3" font-size="8.5" font-weight="normal" fill="#000" text-anchor="middle" textLength="34.2" lengthAdjust="spacingAndGlyphs" stroke="#000" stroke-width="0.25" >02:55:30</text>
<text x="393.42999999999995" y="599.3" font-size="8.5" font-weight="normal" fill="#000" text-anchor="middle" textLength="34.2" lengthAdjust="spacingAndGlyphs" stroke="#000" stroke-width="0.25" >02:56:15</text>
<text x="439.96" y="599.3" font-size="8.5" font-weight="normal" fill="#000" text-anchor="middle" textLength="34.2" lengthAdjust="spacingAndGlyphs" stroke="#000" stroke-width="0.25" >02:57:00</text>
<text x="486.49" y="599.3" font-size="8.5" font-weight="normal" fill="#000" text-anchor="middle" textLength="34.2" lengthAdjust="spacingAndGlyphs" stroke="#000" stroke-width="0.25" >02:57:45</text>
<text x="533.02" y="599.3" font-size="8.5" font-weight="normal" fill="#000" text-anchor="middle" textLength="34.2" lengthAdjust="spacingAndGlyphs" stroke="#000" stroke-width="0.25" >02:58:30</text>
<text x="579.55" y="599.3" font-size="8.5" font-weight="normal" fill="#000" text-anchor="middle" textLength="34.2" lengthAdjust="spacingAndGlyphs" stroke="#000" stroke-width="0.25" >02:59:15</text>
<text x="626.0799999999999" y="599.3" font-size="8.5" font-weight="normal" fill="#000" text-anchor="middle" textLength="34.2" lengthAdjust="spacingAndGlyphs" stroke="#000" stroke-width="0.25" >03:00:00</text>
<text x="672.61" y="599.3" font-size="8.5" font-weight="normal" fill="#000" text-anchor="middle" textLength="34.2" lengthAdjust="spacingAndGlyphs" stroke="#000" stroke-width="0.25" >03:00:45</text>
<text x="719.14" y="599.3" font-size="8.5" font-weight="normal" fill="#000" text-anchor="middle" textLength="34.2" lengthAdjust="spacingAndGlyphs" stroke="#000" stroke-width="0.25" >03:01:30</text>
<text x="765.67" y="599.3" font-size="8.5" font-weight="normal" fill="#000" text-anchor="middle" textLength="34.2" lengthAdjust="spacingAndGlyphs" stroke="#000" stroke-width="0.25" >03:02:15</text>
<text x="812.2" y="599.3" font-size="8.5" font-weight="normal" fill="#000" text-anchor="middle" textLength="34.2" lengthAdjust="spacingAndGlyphs" stroke="#000" stroke-width="0.25" >03:03:00</text>
<text x="858.73" y="599.3" font-size="8.5" font-weight="normal" fill="#000" text-anchor="middle" textLength="34.2" lengthAdjust="spacingAndGlyphs" stroke="#000" stroke-width="0.25" >03:03:45</text>
<text x="905.26" y="599.3" font-size="8.5" font-weight="normal" fill="#000" text-anchor="middle" textLength="34.2" lengthAdjust="spacingAndGlyphs" stroke="#000" stroke-width="0.25" >03:04:30</text>
<text x="951.79" y="599.3" font-size="8.5" font-weight="normal" fill="#000" text-anchor="middle" textLength="34.2" lengthAdjust="spacingAndGlyphs" stroke="#000" stroke-width="0.25" >03:05:15</text>
<text x="998.32" y="599.3" font-size="8.5" font-weight="normal" fill="#000" text-anchor="middle" textLength="34.2" lengthAdjust="spacingAndGlyphs" stroke="#000" stroke-width="0.25" >03:06:00</text>
<text x="1044.85" y="599.3" font-size="8.5" font-weight="normal" fill="#000" text-anchor="middle" textLength="34.2" lengthAdjust="spacingAndGlyphs" stroke="#000" stroke-width="0.25" >03:06:45</text>
<text x="1100.4" y="503.5" font-size="8.5" font-weight="normal" fill="#000" text-anchor="end" textLength="37" lengthAdjust="spacingAndGlyphs" stroke="#000" stroke-width="0.25" >Leak Rate</text>
<rect x="1048.4" y="499.0" width="13" height="2.8" fill="#107010" />
<text x="1046.4" y="503.5" font-size="8.5" font-weight="normal" fill="#000" text-anchor="end" textLength="99" lengthAdjust="spacingAndGlyphs" stroke="#000" stroke-width="0.25" >Leak Rate Upper Threshold</text>
<rect x="932.4000000000001" y="499.0" width="5.5" height="2.6" fill="#ff3030" />
<rect x="939.9000000000001" y="499.0" width="5.5" height="2.6" fill="#ff3030" />
<text x="321" y="615" font-size="8.5" font-weight="normal" fill="#000" text-anchor="start" textLength="44" lengthAdjust="spacingAndGlyphs" stroke="#000" stroke-width="0.25" >Snore: 0.00</text>
<text x="314.6" y="623.5" font-size="8.7" font-weight="normal" fill="#000" text-anchor="end" stroke="#000" stroke-width="0.25" >2.00</text>
<line x1="317.6" y1="618.8" x2="1102" y2="618.8" stroke="#555" stroke-width="1.6" />
<line x1="320.6" y1="618.8" x2="320.6" y2="625" stroke="#000" stroke-width="1.1" />
<line x1="1102" y1="618.8" x2="1102" y2="625" stroke="#000" stroke-width="1.1" />
<text x="1100.4" y="614.4" font-size="8.5" font-weight="normal" fill="#000" text-anchor="end" textLength="22" lengthAdjust="spacingAndGlyphs" stroke="#000" stroke-width="0.25" >Snore</text>
<rect x="1063.4" y="609.9" width="13" height="2.8" fill="#707070" />
<line x1="900.2" y1="183.5" x2="900.2" y2="625" stroke="#3ad83a" stroke-width="1.1" />
<rect x="248.5" y="625" width="878.0" height="26.5" fill="#efefef" />
<line x1="248.5" y1="625.3" x2="1126.5" y2="625.3" stroke="#b8b8b8" stroke-width="1" />
<line x1="248.5" y1="651.3" x2="1126.5" y2="651.3" stroke="#c8c8c8" stroke-width="1" />
<rect x="240.5" y="651.5" width="889.5" height="3" fill="#f6f6f6" />
<rect x="253" y="630.2" width="57" height="15.8" rx="3" fill="#fcfcfc" stroke="#cfcfcf" stroke-width="0.8"/>
<path d="M296.8,630.2 H307 Q310,630.2 310,633.2 V643 Q310,646 307,646 H296.8 Z" fill="url(#pink)"/>
<path d="M300.6,636.2 L303.3,633.4 L306,636.2 M300.6,639.8 L303.3,642.6 L306,639.8" stroke="#fff" stroke-width="1.3" fill="none"/>
<rect x="263" y="634" width="7" height="7" fill="#f4f4f4" stroke="#555" stroke-width="0.8"/>
<path d="M264.2,637.5 L266,639.8 L269.4,634.6" stroke="#20a020" stroke-width="1.2" fill="none"/>
<text x="275.5" y="640.3" font-size="8.7" font-weight="normal" fill="#000" text-anchor="start" textLength="8.8" lengthAdjust="spacingAndGlyphs" stroke="#000" stroke-width="0.25" >PB</text>
<text x="664" y="640.5" font-size="8.5" font-weight="normal" fill="#000" text-anchor="middle" textLength="78" lengthAdjust="spacingAndGlyphs" stroke="#000" stroke-width="0.25" >Jul 24 03:04:26.028</text>
<rect x="1016.6" y="630.4" width="104.4" height="15.2" rx="3" fill="#fcfcfc" stroke="#cfcfcf" stroke-width="0.8"/>
<path d="M1108.1,630.4 H1118 Q1121,630.4 1121,633.4 V642.6 Q1121,645.6 1118,645.6 H1108.1 Z" fill="url(#pink)"/>
<path d="M1111.8,636.2 L1114.5,633.4 L1117.2,636.2 M1111.8,639.8 L1114.5,642.6 L1117.2,639.8" stroke="#fff" stroke-width="1.3" fill="none"/>
<rect x="1028" y="633.6" width="7.6" height="7.6" fill="#f4f4f4" stroke="#555" stroke-width="0.8"/>
<path d="M1029.3,637.4 L1031.2,640 L1034.8,634.4" stroke="#20a020" stroke-width="1.2" fill="none"/>
<text x="1042.5" y="640.2" font-size="9" font-weight="normal" fill="#000" text-anchor="start" textLength="42" lengthAdjust="spacingAndGlyphs" stroke="#000" stroke-width="0.25" >Event Flags</text>
</svg></body></html>
